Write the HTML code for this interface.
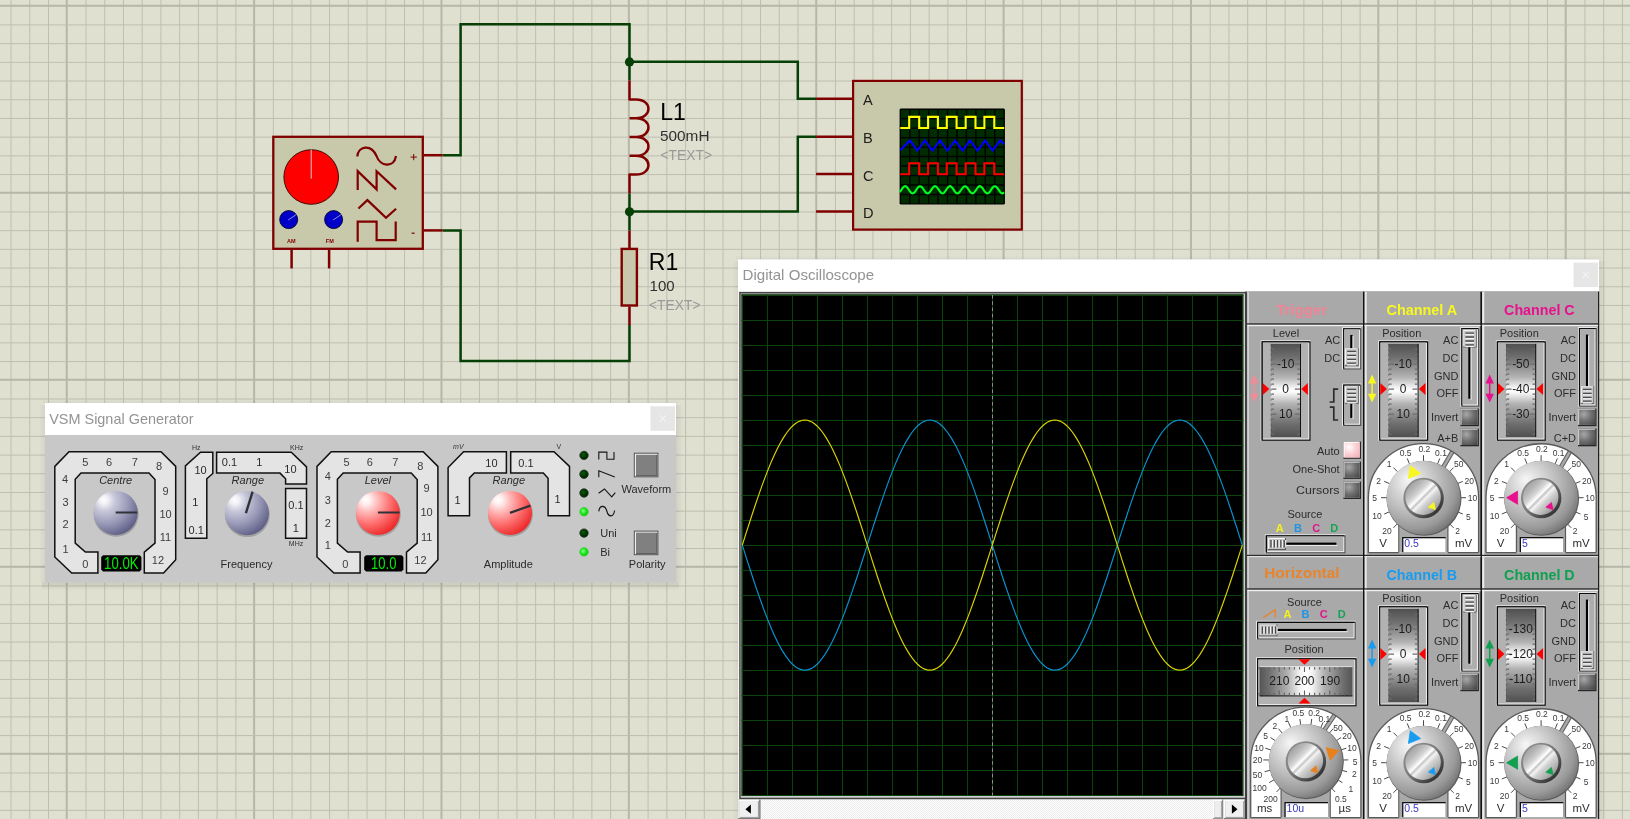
<!DOCTYPE html>
<html><head><meta charset="utf-8"><title>Proteus - Digital Oscilloscope</title>
<style>
html,body{margin:0;padding:0;background:#dfe0d0;overflow:hidden}
svg{display:block;font-family:"Liberation Sans",sans-serif;will-change:transform}
text{font-family:"Liberation Sans",sans-serif}
</style></head><body>
<svg width="1630" height="819" viewBox="0 0 1630 819">
<defs>
<radialGradient id="kb" cx="0.3" cy="0.26" r="0.8" fx="0.22" fy="0.2">
 <stop offset="0" stop-color="#ffffff"/><stop offset="0.12" stop-color="#f0f0f6"/><stop offset="0.3" stop-color="#c8c8da"/><stop offset="0.62" stop-color="#9c9cba"/><stop offset="1" stop-color="#5e5e86"/>
</radialGradient>
<radialGradient id="kr" cx="0.3" cy="0.26" r="0.8" fx="0.22" fy="0.2">
 <stop offset="0" stop-color="#ffffff"/><stop offset="0.12" stop-color="#fff0f0"/><stop offset="0.3" stop-color="#ffc0c0"/><stop offset="0.62" stop-color="#ff7474"/><stop offset="1" stop-color="#ec2828"/>
</radialGradient>
<radialGradient id="ledoff" cx="0.4" cy="0.4" r="0.6">
 <stop offset="0" stop-color="#0a5a0a"/><stop offset="0.6" stop-color="#003800"/><stop offset="1" stop-color="#002000"/>
</radialGradient>
<radialGradient id="ledon" cx="0.4" cy="0.4" r="0.6">
 <stop offset="0" stop-color="#90ff90"/><stop offset="0.5" stop-color="#20f020"/><stop offset="1" stop-color="#10c010"/>
</radialGradient>
<linearGradient id="rollV" x1="0" y1="0" x2="0" y2="1">
 <stop offset="0" stop-color="#505050"/><stop offset="0.14" stop-color="#6e6e6e"/><stop offset="0.36" stop-color="#b4b4b4"/><stop offset="0.47" stop-color="#f4f4f4"/><stop offset="0.5" stop-color="#ffffff"/><stop offset="0.53" stop-color="#f4f4f4"/><stop offset="0.64" stop-color="#b4b4b4"/><stop offset="0.86" stop-color="#6e6e6e"/><stop offset="1" stop-color="#505050"/>
</linearGradient>
<linearGradient id="rollH" x1="0" y1="0" x2="1" y2="0">
 <stop offset="0" stop-color="#555555"/><stop offset="0.1" stop-color="#6e6e6e"/><stop offset="0.3" stop-color="#b0b0b0"/><stop offset="0.43" stop-color="#f2f2f2"/><stop offset="0.5" stop-color="#ffffff"/><stop offset="0.57" stop-color="#f2f2f2"/><stop offset="0.7" stop-color="#b0b0b0"/><stop offset="0.9" stop-color="#6e6e6e"/><stop offset="1" stop-color="#555555"/>
</linearGradient>
<radialGradient id="dialOuter" cx="0.38" cy="0.36" r="0.68" fx="0.29" fy="0.25">
 <stop offset="0" stop-color="#f6f6f6"/><stop offset="0.28" stop-color="#dadada"/><stop offset="0.58" stop-color="#bababa"/><stop offset="0.84" stop-color="#9a9a9a"/><stop offset="1" stop-color="#767676"/>
</radialGradient>
<linearGradient id="recess" x1="0.15" y1="0.15" x2="0.85" y2="0.85">
 <stop offset="0" stop-color="#8c8c8c"/><stop offset="0.45" stop-color="#7c7c7c"/><stop offset="1" stop-color="#343434"/>
</linearGradient>
<linearGradient id="dialInner" x1="0.1" y1="0.1" x2="0.9" y2="0.9">
 <stop offset="0" stop-color="#9c9c9c"/><stop offset="0.2" stop-color="#b8b8b8"/><stop offset="0.34" stop-color="#d4d4d4"/><stop offset="0.45" stop-color="#ffffff"/><stop offset="0.505" stop-color="#c4c4c4"/><stop offset="0.56" stop-color="#f4f4f4"/><stop offset="0.66" stop-color="#d2d2d2"/><stop offset="0.82" stop-color="#b4b4b4"/><stop offset="1" stop-color="#8c8c8c"/>
</linearGradient>
<radialGradient id="btnDark" cx="0.3" cy="0.3" r="0.9">
 <stop offset="0" stop-color="#a8a8a8"/><stop offset="0.5" stop-color="#707070"/><stop offset="1" stop-color="#484848"/>
</radialGradient>
<radialGradient id="btnPink" cx="0.3" cy="0.3" r="0.9">
 <stop offset="0" stop-color="#ffffff"/><stop offset="0.5" stop-color="#fbd0d4"/><stop offset="1" stop-color="#f4b0b8"/>
</radialGradient>
<linearGradient id="shR" x1="0" y1="0" x2="1" y2="0"><stop offset="0" stop-color="#000" stop-opacity="0.07"/><stop offset="1" stop-color="#000" stop-opacity="0"/></linearGradient>
<linearGradient id="shL" x1="1" y1="0" x2="0" y2="0"><stop offset="0" stop-color="#000" stop-opacity="0.05"/><stop offset="1" stop-color="#000" stop-opacity="0"/></linearGradient>
<linearGradient id="shB" x1="0" y1="0" x2="0" y2="1"><stop offset="0" stop-color="#000" stop-opacity="0.09"/><stop offset="1" stop-color="#000" stop-opacity="0"/></linearGradient>
<linearGradient id="shT" x1="0" y1="1" x2="0" y2="0"><stop offset="0" stop-color="#000" stop-opacity="0.04"/><stop offset="1" stop-color="#000" stop-opacity="0"/></linearGradient>
</defs>
<rect x="0" y="0" width="1630" height="819" fill="#dfe0d0"/>
<g>
<rect x="10.53" y="0" width="1" height="819" fill="#bebfb0"/>
<rect x="29.26" y="0" width="1" height="819" fill="#bebfb0"/>
<rect x="48.0" y="0" width="1" height="819" fill="#bebfb0"/>
<rect x="65.74" y="0" width="2" height="819" fill="#b6b7a8"/>
<rect x="85.47" y="0" width="1" height="819" fill="#bebfb0"/>
<rect x="104.21" y="0" width="1" height="819" fill="#bebfb0"/>
<rect x="122.95" y="0" width="1" height="819" fill="#bebfb0"/>
<rect x="141.69" y="0" width="1" height="819" fill="#bebfb0"/>
<rect x="160.42" y="0" width="1" height="819" fill="#bebfb0"/>
<rect x="179.16" y="0" width="1" height="819" fill="#bebfb0"/>
<rect x="197.9" y="0" width="1" height="819" fill="#bebfb0"/>
<rect x="216.63" y="0" width="1" height="819" fill="#bebfb0"/>
<rect x="235.37" y="0" width="1" height="819" fill="#bebfb0"/>
<rect x="253.11" y="0" width="2" height="819" fill="#b6b7a8"/>
<rect x="272.84" y="0" width="1" height="819" fill="#bebfb0"/>
<rect x="291.58" y="0" width="1" height="819" fill="#bebfb0"/>
<rect x="310.32" y="0" width="1" height="819" fill="#bebfb0"/>
<rect x="329.05" y="0" width="1" height="819" fill="#bebfb0"/>
<rect x="347.79" y="0" width="1" height="819" fill="#bebfb0"/>
<rect x="366.53" y="0" width="1" height="819" fill="#bebfb0"/>
<rect x="385.27" y="0" width="1" height="819" fill="#bebfb0"/>
<rect x="404.0" y="0" width="1" height="819" fill="#bebfb0"/>
<rect x="422.74" y="0" width="1" height="819" fill="#bebfb0"/>
<rect x="440.48" y="0" width="2" height="819" fill="#b6b7a8"/>
<rect x="460.21" y="0" width="1" height="819" fill="#bebfb0"/>
<rect x="478.95" y="0" width="1" height="819" fill="#bebfb0"/>
<rect x="497.69" y="0" width="1" height="819" fill="#bebfb0"/>
<rect x="516.42" y="0" width="1" height="819" fill="#bebfb0"/>
<rect x="535.16" y="0" width="1" height="819" fill="#bebfb0"/>
<rect x="553.9" y="0" width="1" height="819" fill="#bebfb0"/>
<rect x="572.64" y="0" width="1" height="819" fill="#bebfb0"/>
<rect x="591.37" y="0" width="1" height="819" fill="#bebfb0"/>
<rect x="610.11" y="0" width="1" height="819" fill="#bebfb0"/>
<rect x="627.85" y="0" width="2" height="819" fill="#b6b7a8"/>
<rect x="647.58" y="0" width="1" height="819" fill="#bebfb0"/>
<rect x="666.32" y="0" width="1" height="819" fill="#bebfb0"/>
<rect x="685.06" y="0" width="1" height="819" fill="#bebfb0"/>
<rect x="703.79" y="0" width="1" height="819" fill="#bebfb0"/>
<rect x="722.53" y="0" width="1" height="819" fill="#bebfb0"/>
<rect x="741.27" y="0" width="1" height="819" fill="#bebfb0"/>
<rect x="760.01" y="0" width="1" height="819" fill="#bebfb0"/>
<rect x="778.74" y="0" width="1" height="819" fill="#bebfb0"/>
<rect x="797.48" y="0" width="1" height="819" fill="#bebfb0"/>
<rect x="815.22" y="0" width="2" height="819" fill="#b6b7a8"/>
<rect x="834.95" y="0" width="1" height="819" fill="#bebfb0"/>
<rect x="853.69" y="0" width="1" height="819" fill="#bebfb0"/>
<rect x="872.43" y="0" width="1" height="819" fill="#bebfb0"/>
<rect x="891.16" y="0" width="1" height="819" fill="#bebfb0"/>
<rect x="909.9" y="0" width="1" height="819" fill="#bebfb0"/>
<rect x="928.64" y="0" width="1" height="819" fill="#bebfb0"/>
<rect x="947.38" y="0" width="1" height="819" fill="#bebfb0"/>
<rect x="966.11" y="0" width="1" height="819" fill="#bebfb0"/>
<rect x="984.85" y="0" width="1" height="819" fill="#bebfb0"/>
<rect x="1002.59" y="0" width="2" height="819" fill="#b6b7a8"/>
<rect x="1022.32" y="0" width="1" height="819" fill="#bebfb0"/>
<rect x="1041.06" y="0" width="1" height="819" fill="#bebfb0"/>
<rect x="1059.8" y="0" width="1" height="819" fill="#bebfb0"/>
<rect x="1078.53" y="0" width="1" height="819" fill="#bebfb0"/>
<rect x="1097.27" y="0" width="1" height="819" fill="#bebfb0"/>
<rect x="1116.01" y="0" width="1" height="819" fill="#bebfb0"/>
<rect x="1134.75" y="0" width="1" height="819" fill="#bebfb0"/>
<rect x="1153.48" y="0" width="1" height="819" fill="#bebfb0"/>
<rect x="1172.22" y="0" width="1" height="819" fill="#bebfb0"/>
<rect x="1189.96" y="0" width="2" height="819" fill="#b6b7a8"/>
<rect x="1209.69" y="0" width="1" height="819" fill="#bebfb0"/>
<rect x="1228.43" y="0" width="1" height="819" fill="#bebfb0"/>
<rect x="1247.17" y="0" width="1" height="819" fill="#bebfb0"/>
<rect x="1265.9" y="0" width="1" height="819" fill="#bebfb0"/>
<rect x="1284.64" y="0" width="1" height="819" fill="#bebfb0"/>
<rect x="1303.38" y="0" width="1" height="819" fill="#bebfb0"/>
<rect x="1322.12" y="0" width="1" height="819" fill="#bebfb0"/>
<rect x="1340.85" y="0" width="1" height="819" fill="#bebfb0"/>
<rect x="1359.59" y="0" width="1" height="819" fill="#bebfb0"/>
<rect x="1377.33" y="0" width="2" height="819" fill="#b6b7a8"/>
<rect x="1397.06" y="0" width="1" height="819" fill="#bebfb0"/>
<rect x="1415.8" y="0" width="1" height="819" fill="#bebfb0"/>
<rect x="1434.54" y="0" width="1" height="819" fill="#bebfb0"/>
<rect x="1453.27" y="0" width="1" height="819" fill="#bebfb0"/>
<rect x="1472.01" y="0" width="1" height="819" fill="#bebfb0"/>
<rect x="1490.75" y="0" width="1" height="819" fill="#bebfb0"/>
<rect x="1509.49" y="0" width="1" height="819" fill="#bebfb0"/>
<rect x="1528.22" y="0" width="1" height="819" fill="#bebfb0"/>
<rect x="1546.96" y="0" width="1" height="819" fill="#bebfb0"/>
<rect x="1564.7" y="0" width="2" height="819" fill="#b6b7a8"/>
<rect x="1584.43" y="0" width="1" height="819" fill="#bebfb0"/>
<rect x="1603.17" y="0" width="1" height="819" fill="#bebfb0"/>
<rect x="1621.91" y="0" width="1" height="819" fill="#bebfb0"/>
<rect x="0" y="4.74" width="1630" height="2" fill="#b6b7a8"/>
<rect x="0" y="24.44" width="1630" height="1" fill="#bebfb0"/>
<rect x="0" y="43.14" width="1630" height="1" fill="#bebfb0"/>
<rect x="0" y="61.84" width="1630" height="1" fill="#bebfb0"/>
<rect x="0" y="80.54" width="1630" height="1" fill="#bebfb0"/>
<rect x="0" y="99.24" width="1630" height="1" fill="#bebfb0"/>
<rect x="0" y="117.95" width="1630" height="1" fill="#bebfb0"/>
<rect x="0" y="136.65" width="1630" height="1" fill="#bebfb0"/>
<rect x="0" y="155.35" width="1630" height="1" fill="#bebfb0"/>
<rect x="0" y="174.05" width="1630" height="1" fill="#bebfb0"/>
<rect x="0" y="191.75" width="1630" height="2" fill="#b6b7a8"/>
<rect x="0" y="211.45" width="1630" height="1" fill="#bebfb0"/>
<rect x="0" y="230.15" width="1630" height="1" fill="#bebfb0"/>
<rect x="0" y="248.85" width="1630" height="1" fill="#bebfb0"/>
<rect x="0" y="267.55" width="1630" height="1" fill="#bebfb0"/>
<rect x="0" y="286.25" width="1630" height="1" fill="#bebfb0"/>
<rect x="0" y="304.96" width="1630" height="1" fill="#bebfb0"/>
<rect x="0" y="323.66" width="1630" height="1" fill="#bebfb0"/>
<rect x="0" y="342.36" width="1630" height="1" fill="#bebfb0"/>
<rect x="0" y="361.06" width="1630" height="1" fill="#bebfb0"/>
<rect x="0" y="378.76" width="1630" height="2" fill="#b6b7a8"/>
<rect x="0" y="398.46" width="1630" height="1" fill="#bebfb0"/>
<rect x="0" y="417.16" width="1630" height="1" fill="#bebfb0"/>
<rect x="0" y="435.86" width="1630" height="1" fill="#bebfb0"/>
<rect x="0" y="454.56" width="1630" height="1" fill="#bebfb0"/>
<rect x="0" y="473.27" width="1630" height="1" fill="#bebfb0"/>
<rect x="0" y="491.97" width="1630" height="1" fill="#bebfb0"/>
<rect x="0" y="510.67" width="1630" height="1" fill="#bebfb0"/>
<rect x="0" y="529.37" width="1630" height="1" fill="#bebfb0"/>
<rect x="0" y="548.07" width="1630" height="1" fill="#bebfb0"/>
<rect x="0" y="565.77" width="1630" height="2" fill="#b6b7a8"/>
<rect x="0" y="585.47" width="1630" height="1" fill="#bebfb0"/>
<rect x="0" y="604.17" width="1630" height="1" fill="#bebfb0"/>
<rect x="0" y="622.87" width="1630" height="1" fill="#bebfb0"/>
<rect x="0" y="641.57" width="1630" height="1" fill="#bebfb0"/>
<rect x="0" y="660.27" width="1630" height="1" fill="#bebfb0"/>
<rect x="0" y="678.98" width="1630" height="1" fill="#bebfb0"/>
<rect x="0" y="697.68" width="1630" height="1" fill="#bebfb0"/>
<rect x="0" y="716.38" width="1630" height="1" fill="#bebfb0"/>
<rect x="0" y="735.08" width="1630" height="1" fill="#bebfb0"/>
<rect x="0" y="752.78" width="1630" height="2" fill="#b6b7a8"/>
<rect x="0" y="772.48" width="1630" height="1" fill="#bebfb0"/>
<rect x="0" y="791.18" width="1630" height="1" fill="#bebfb0"/>
<rect x="0" y="809.88" width="1630" height="1" fill="#bebfb0"/>
</g>
<polyline points="442.6,155.2 460.6,155.2 460.6,24.2 629.5,24.2 629.5,80.5" fill="none" stroke="#064006" stroke-width="2.5" stroke-linejoin="miter" />
<polyline points="442.6,230.4 460.6,230.4 460.6,360.9 629.5,360.9 629.5,325.0" fill="none" stroke="#064006" stroke-width="2.5" stroke-linejoin="miter" />
<polyline points="629.5,61.7 797.8,61.7 797.8,98.8 816.1,98.8" fill="none" stroke="#064006" stroke-width="2.5" stroke-linejoin="miter" />
<polyline points="629.5,193.4 629.5,230.6" fill="none" stroke="#064006" stroke-width="2.5" stroke-linejoin="miter" />
<polyline points="629.5,211.6 797.8,211.6 797.8,136.7 816.1,136.7" fill="none" stroke="#064006" stroke-width="2.5" stroke-linejoin="miter" />
<circle cx="629.5" cy="61.9" r="4.6" fill="#064006"/>
<circle cx="629.5" cy="211.8" r="4.6" fill="#064006"/>
<rect x="273.3" y="136.8" width="149.5" height="112" fill="#c8c8aa" stroke="#800000" stroke-width="2.3"/>
<polyline points="424.0,155.2 442.6,155.2" fill="none" stroke="#800000" stroke-width="2.5" stroke-linejoin="miter" />
<polyline points="424.0,230.4 442.6,230.4" fill="none" stroke="#800000" stroke-width="2.5" stroke-linejoin="miter" />
<polyline points="291.6,249.9 291.6,268.4" fill="none" stroke="#800000" stroke-width="2.5" stroke-linejoin="miter" />
<polyline points="329.1,249.9 329.1,268.4" fill="none" stroke="#800000" stroke-width="2.5" stroke-linejoin="miter" />
<circle cx="311.2" cy="177" r="27.3" fill="#ff0000" stroke="#300000" stroke-width="0.9"/>
<line x1="311.2" y1="149.6" x2="311.2" y2="178.6" stroke="#d8c8c8" stroke-width="1"/>
<circle cx="288.7" cy="219.6" r="9" fill="#0000c8" stroke="#000030" stroke-width="0.9"/>
<line x1="288.2" y1="220" x2="295.9" y2="214.8" stroke="#9090e0" stroke-width="1"/>
<circle cx="333.6" cy="219.6" r="9" fill="#0000c8" stroke="#000030" stroke-width="0.9"/>
<line x1="333.1" y1="220" x2="340.8" y2="214.8" stroke="#9090e0" stroke-width="1"/>
<text x="291.2" y="242.6" font-size="5.5" fill="#800000" text-anchor="middle" font-weight="bold" font-style="normal" >AM</text>
<text x="329.8" y="242.6" font-size="5.5" fill="#800000" text-anchor="middle" font-weight="bold" font-style="normal" >FM</text>
<path d="M410.6,157.1 H416.8 M413.7,154 V160.2" stroke="#800000" stroke-width="1" fill="none"/>
<path d="M411.6,233.2 H414.6" stroke="#800000" stroke-width="1.2" fill="none"/>
<path d="M357.3,156.5 C358,146 371,143.5 376.5,156 C380,166.5 394,168.5 396,156" stroke="#800000" stroke-width="2.2" fill="none"/>
<polyline points="357.7,190.0 357.7,171.2 376.6,189.4 376.6,171.2 396.1,189.4" fill="none" stroke="#800000" stroke-width="2.2" stroke-linejoin="miter" />
<polyline points="358.4,208.5 367.4,200.1 386.0,217.7 396.1,208.7" fill="none" stroke="#800000" stroke-width="2.2" stroke-linejoin="miter" />
<polyline points="357.7,241.7 357.7,221.6 376.6,221.6 376.6,240.1 395.7,240.1 395.7,221.6" fill="none" stroke="#800000" stroke-width="2.2" stroke-linejoin="miter" />
<polyline points="629.5,80.5 629.5,100.4" fill="none" stroke="#800000" stroke-width="2.5" stroke-linejoin="miter" />
<path d="M629.5,99.4 H636 C652.6,99.4 652.6,118.2 636,118.2 H631 M629.5,118.2 H636 C652.6,118.2 652.6,137.0 636,137.0 H631 M629.5,137.0 H636 C652.6,137.0 652.6,155.8 636,155.8 H631 M629.5,155.8 H636 C652.6,155.8 652.6,174.6 636,174.6 H629.5 " stroke="#800000" stroke-width="2.5" fill="none" stroke-linejoin="round"/>
<polyline points="629.5,173.6 629.5,193.4" fill="none" stroke="#800000" stroke-width="2.5" stroke-linejoin="miter" />
<polyline points="629.5,230.6 629.5,248.0" fill="none" stroke="#800000" stroke-width="2.5" stroke-linejoin="miter" />
<rect x="621.7" y="248.9" width="15.2" height="56.6" fill="#c8c8aa" stroke="#800000" stroke-width="2.4"/>
<polyline points="629.5,306.5 629.5,325.0" fill="none" stroke="#800000" stroke-width="2.5" stroke-linejoin="miter" />
<text x="660.2" y="120.0" font-size="23" fill="#000" text-anchor="start" font-weight="normal" font-style="normal" >L1</text>
<text x="660.0" y="141.3" font-size="15" fill="#303030" text-anchor="start" font-weight="normal" font-style="normal" textLength="49.5" lengthAdjust="spacingAndGlyphs">500mH</text>
<text x="660.5" y="160.0" font-size="14" fill="#9a9a9a" text-anchor="start" font-weight="normal" font-style="normal" textLength="51.5" lengthAdjust="spacingAndGlyphs">&lt;TEXT&gt;</text>
<text x="648.8" y="270.0" font-size="23" fill="#000" text-anchor="start" font-weight="normal" font-style="normal" >R1</text>
<text x="649.6" y="291.0" font-size="15" fill="#303030" text-anchor="start" font-weight="normal" font-style="normal" >100</text>
<text x="649.0" y="309.7" font-size="14" fill="#9a9a9a" text-anchor="start" font-weight="normal" font-style="normal" textLength="51.5" lengthAdjust="spacingAndGlyphs">&lt;TEXT&gt;</text>
<rect x="853.1" y="80.9" width="168.7" height="148.7" fill="#c8c8aa" stroke="#800000" stroke-width="2.2"/>
<polyline points="816.1,98.8 852.0,98.8" fill="none" stroke="#800000" stroke-width="2.5" stroke-linejoin="miter" />
<text x="863.0" y="105.4" font-size="14.6" fill="#202020" text-anchor="start" font-weight="normal" font-style="normal" >A</text>
<polyline points="816.1,136.7 852.0,136.7" fill="none" stroke="#800000" stroke-width="2.5" stroke-linejoin="miter" />
<text x="863.0" y="143.3" font-size="14.6" fill="#202020" text-anchor="start" font-weight="normal" font-style="normal" >B</text>
<polyline points="816.1,174.0 852.0,174.0" fill="none" stroke="#800000" stroke-width="2.5" stroke-linejoin="miter" />
<text x="863.0" y="180.6" font-size="14.6" fill="#202020" text-anchor="start" font-weight="normal" font-style="normal" >C</text>
<polyline points="816.1,211.6 852.0,211.6" fill="none" stroke="#800000" stroke-width="2.5" stroke-linejoin="miter" />
<text x="863.0" y="218.2" font-size="14.6" fill="#202020" text-anchor="start" font-weight="normal" font-style="normal" >D</text>
<rect x="900.3" y="109.2" width="103.9" height="94.7" fill="#002c00"/>
<path d="M900.30,109.2 V203.9 M909.75,109.2 V203.9 M919.19,109.2 V203.9 M928.64,109.2 V203.9 M938.08,109.2 V203.9 M947.53,109.2 V203.9 M956.97,109.2 V203.9 M966.42,109.2 V203.9 M975.86,109.2 V203.9 M985.31,109.2 V203.9 M994.75,109.2 V203.9 M1004.20,109.2 V203.9 M900.3,109.20 H1004.1999999999999 M900.3,118.67 H1004.1999999999999 M900.3,128.14 H1004.1999999999999 M900.3,137.61 H1004.1999999999999 M900.3,147.08 H1004.1999999999999 M900.3,156.55 H1004.1999999999999 M900.3,166.02 H1004.1999999999999 M900.3,175.49 H1004.1999999999999 M900.3,184.96 H1004.1999999999999 M900.3,194.43 H1004.1999999999999 M900.3,203.90 H1004.1999999999999 " stroke="#000" stroke-width="1.4" fill="none"/>
<polyline points="900.3,128.0 909.2,128.0 909.2,116.9 919.2,116.9 919.2,128.0 928.1,128.0 928.1,116.9 937.9,116.9 937.9,128.0 946.8,128.0 946.8,116.9 956.6,116.9 956.6,128.0 965.7,128.0 965.7,116.9 975.5,116.9 975.5,128.0 984.4,128.0 984.4,116.9 994.3,116.9 994.3,128.0 1004.2,128.0" fill="none" stroke="#ffff00" stroke-width="2.1" stroke-linejoin="miter" />
<polyline points="900.3,150.2 909.9,140.4 917.4,150.6 924.9,140.4 932.4,150.6 940.0,140.4 947.5,150.6 955.0,140.4 962.5,150.6 970.0,140.4 977.6,150.6 985.1,140.4 992.6,150.6 1000.1,140.4 1004.2,144.0" fill="none" stroke="#0000ff" stroke-width="2.1" stroke-linejoin="miter" />
<polyline points="900.3,174.3 909.2,174.3 909.2,163.3 919.2,163.3 919.2,174.3 928.1,174.3 928.1,163.3 937.9,163.3 937.9,174.3 946.8,174.3 946.8,163.3 956.6,163.3 956.6,174.3 965.7,174.3 965.7,163.3 975.5,163.3 975.5,174.3 984.4,174.3 984.4,163.3 994.3,163.3 994.3,174.3 1004.2,174.3" fill="none" stroke="#ff0000" stroke-width="2.1" stroke-linejoin="miter" />
<polyline points="899.8,192.0 900.5,191.1 901.2,190.1 901.9,189.0 902.6,188.1 903.3,187.2 904.0,186.6 904.7,186.3 905.4,186.2 906.1,186.5 906.8,187.0 907.5,187.8 908.2,188.8 908.9,189.8 909.6,190.9 910.3,191.8 911.0,192.6 911.7,193.1 912.4,193.4 913.1,193.3 913.8,193.0 914.5,192.3 915.2,191.5 915.9,190.5 916.6,189.4 917.3,188.4 918.0,187.5 918.7,186.8 919.4,186.3 920.1,186.2 920.8,186.4 921.5,186.8 922.2,187.5 922.9,188.4 923.6,189.5 924.3,190.5 925.0,191.5 925.7,192.4 926.4,193.0 927.1,193.3 927.8,193.4 928.5,193.1 929.2,192.6 929.9,191.8 930.6,190.8 931.3,189.8 932.0,188.8 932.7,187.8 933.4,187.0 934.1,186.5 934.8,186.2 935.5,186.3 936.2,186.6 936.9,187.3 937.6,188.1 938.3,189.1 939.0,190.1 939.7,191.2 940.4,192.1 941.1,192.8 941.8,193.2 942.5,193.4 943.2,193.2 943.9,192.8 944.6,192.1 945.3,191.2 946.0,190.2 946.7,189.1 947.4,188.1 948.1,187.3 948.8,186.6 949.5,186.3 950.2,186.2 950.9,186.5 951.6,187.0 952.3,187.8 953.0,188.7 953.7,189.8 954.4,190.8 955.1,191.8 955.8,192.6 956.5,193.1 957.2,193.4 957.9,193.3 958.6,193.0 959.3,192.4 960.0,191.5 960.7,190.5 961.4,189.5 962.1,188.5 962.8,187.6 963.5,186.8 964.2,186.4 964.9,186.2 965.6,186.3 966.3,186.8 967.0,187.5 967.7,188.4 968.4,189.4 969.1,190.4 969.8,191.4 970.5,192.3 971.2,192.9 971.9,193.3 972.6,193.4 973.3,193.2 974.0,192.6 974.7,191.9 975.4,190.9 976.1,189.9 976.8,188.8 977.5,187.9 978.2,187.1 978.9,186.5 979.6,186.2 980.3,186.3 981.0,186.6 981.7,187.2 982.4,188.0 983.1,189.0 983.8,190.1 984.5,191.1 985.2,192.0 985.9,192.7 986.6,193.2 987.3,193.4 988.0,193.3 988.7,192.8 989.4,192.2 990.1,191.3 990.8,190.2 991.5,189.2 992.2,188.2 992.9,187.3 993.6,186.7 994.3,186.3 995.0,186.2 995.7,186.4 996.4,187.0 997.1,187.7 997.8,188.7 998.5,189.7 999.2,190.7 999.9,191.7 1000.6,192.5 1001.3,193.1 1002.0,193.4 1002.7,193.4 1003.4,193.0 1004.1,192.4" fill="none" stroke="#00ff20" stroke-width="2.1" stroke-linejoin="miter" />
<rect x="676" y="405" width="7" height="177.70000000000005" fill="url(#shR)"/>
<rect x="39" y="405" width="6" height="177.70000000000005" fill="url(#shL)"/>
<rect x="42" y="582.7" width="637" height="8" fill="url(#shB)"/>
<rect x="43" y="399" width="635" height="4" fill="url(#shT)"/>
<rect x="45" y="403" width="631" height="179.70000000000005" fill="#c8c8c8"/>
<rect x="45" y="403" width="631" height="32" fill="#ffffff"/>
<text x="49.2" y="423.8" font-size="15" fill="#939393" text-anchor="start" font-weight="normal" font-style="normal" textLength="144.5" lengthAdjust="spacingAndGlyphs">VSM Signal Generator</text>
<rect x="650.5" y="406.3" width="24.5" height="24.5" fill="#e6e6e6"/>
<path d="M659.5,415.3 L665.9000000000001,421.7 M665.9000000000001,415.3 L659.5,421.7" stroke="#fafafa" stroke-width="1" fill="none"/>
<polygon points="69.0,451.7 161.0,451.7 175.7,466.4 175.7,559.8 163.6,573.0 144.3,573.0 144.3,552.1 155.0,543.1 155.0,479.5 149.0,472.9 81.0,472.9 75.2,479.2 75.2,543.1 85.4,552.1 97.9,552.1 97.9,573.0 71.7,573.0 54.8,557.0 54.8,466.4" fill="#e4e4e4" stroke="#101010" stroke-width="1.5" stroke-linejoin="miter"/>
<text x="85.2" y="466.3" font-size="11" fill="#3c3c3c" text-anchor="middle" font-weight="normal" font-style="normal" >5</text>
<text x="109.0" y="466.3" font-size="11" fill="#3c3c3c" text-anchor="middle" font-weight="normal" font-style="normal" >6</text>
<text x="134.8" y="466.3" font-size="11" fill="#3c3c3c" text-anchor="middle" font-weight="normal" font-style="normal" >7</text>
<text x="159.0" y="470.0" font-size="11" fill="#3c3c3c" text-anchor="middle" font-weight="normal" font-style="normal" >8</text>
<text x="65.0" y="482.7" font-size="11" fill="#3c3c3c" text-anchor="middle" font-weight="normal" font-style="normal" >4</text>
<text x="65.5" y="506.0" font-size="11" fill="#3c3c3c" text-anchor="middle" font-weight="normal" font-style="normal" >3</text>
<text x="65.5" y="527.5" font-size="11" fill="#3c3c3c" text-anchor="middle" font-weight="normal" font-style="normal" >2</text>
<text x="65.5" y="552.5" font-size="11" fill="#3c3c3c" text-anchor="middle" font-weight="normal" font-style="normal" >1</text>
<text x="85.2" y="568.0" font-size="11" fill="#3c3c3c" text-anchor="middle" font-weight="normal" font-style="normal" >0</text>
<text x="165.5" y="494.9" font-size="11" fill="#3c3c3c" text-anchor="middle" font-weight="normal" font-style="normal" >9</text>
<text x="165.5" y="517.5" font-size="11" fill="#3c3c3c" text-anchor="middle" font-weight="normal" font-style="normal" >10</text>
<text x="165.5" y="541.3" font-size="11" fill="#3c3c3c" text-anchor="middle" font-weight="normal" font-style="normal" >11</text>
<text x="157.9" y="564.0" font-size="11" fill="#3c3c3c" text-anchor="middle" font-weight="normal" font-style="normal" >12</text>
<text x="115.7" y="484.0" font-size="11" fill="#2a2a2a" text-anchor="middle" font-weight="normal" font-style="italic" >Centre</text>
<circle cx="116.1" cy="514.3" r="22.5" fill="#000" opacity="0.2"/>
<circle cx="115.7" cy="512.9" r="22" fill="url(#kb)"/>
<line x1="115.7" y1="512.5" x2="137.3" y2="512.5" stroke="#303038" stroke-width="2"/>
<path d="M103.0,555.3 H139.59999999999997 L141.39999999999998,557.0999999999999 V569.6 L139.59999999999997,571.4 H103.0 L101.2,569.6 V557.0999999999999 Z" fill="#000"/>
<text x="121.3" y="569.2" font-size="15.6" fill="#00ee00" text-anchor="middle" font-weight="normal" font-style="normal" textLength="34.4" lengthAdjust="spacingAndGlyphs">10.0K</text>
<polygon points="331.2,451.7 423.2,451.7 437.9,466.4 437.9,559.8 425.8,573.0 406.5,573.0 406.5,552.1 417.2,543.1 417.2,479.5 411.2,472.9 343.2,472.9 337.4,479.2 337.4,543.1 347.6,552.1 360.1,552.1 360.1,573.0 333.9,573.0 317.0,557.0 317.0,466.4" fill="#e4e4e4" stroke="#101010" stroke-width="1.5" stroke-linejoin="miter"/>
<text x="327.7" y="479.9" font-size="11" fill="#3c3c3c" text-anchor="middle" font-weight="normal" font-style="normal" >4</text>
<text x="327.7" y="503.9" font-size="11" fill="#3c3c3c" text-anchor="middle" font-weight="normal" font-style="normal" >3</text>
<text x="327.7" y="526.6" font-size="11" fill="#3c3c3c" text-anchor="middle" font-weight="normal" font-style="normal" >2</text>
<text x="327.7" y="548.7" font-size="11" fill="#3c3c3c" text-anchor="middle" font-weight="normal" font-style="normal" >1</text>
<text x="345.3" y="567.6" font-size="11" fill="#3c3c3c" text-anchor="middle" font-weight="normal" font-style="normal" >0</text>
<text x="426.6" y="492.2" font-size="11" fill="#3c3c3c" text-anchor="middle" font-weight="normal" font-style="normal" >9</text>
<text x="426.6" y="516.2" font-size="11" fill="#3c3c3c" text-anchor="middle" font-weight="normal" font-style="normal" >10</text>
<text x="426.6" y="541.3" font-size="11" fill="#3c3c3c" text-anchor="middle" font-weight="normal" font-style="normal" >11</text>
<text x="420.4" y="564.4" font-size="11" fill="#3c3c3c" text-anchor="middle" font-weight="normal" font-style="normal" >12</text>
<text x="346.6" y="466.1" font-size="11" fill="#3c3c3c" text-anchor="middle" font-weight="normal" font-style="normal" >5</text>
<text x="369.9" y="466.1" font-size="11" fill="#3c3c3c" text-anchor="middle" font-weight="normal" font-style="normal" >6</text>
<text x="395.2" y="466.1" font-size="11" fill="#3c3c3c" text-anchor="middle" font-weight="normal" font-style="normal" >7</text>
<text x="420.4" y="469.5" font-size="11" fill="#3c3c3c" text-anchor="middle" font-weight="normal" font-style="normal" >8</text>
<text x="377.9" y="484.0" font-size="11" fill="#2a2a2a" text-anchor="middle" font-weight="normal" font-style="italic" >Level</text>
<circle cx="378.29999999999995" cy="514.3" r="22.5" fill="#000" opacity="0.2"/>
<circle cx="377.9" cy="512.9" r="22" fill="url(#kr)"/>
<line x1="377.9" y1="512.5" x2="399.5" y2="512.5" stroke="#303038" stroke-width="2"/>
<path d="M366.0,555.3 H401.59999999999997 L403.4,557.0999999999999 V569.6 L401.59999999999997,571.4 H366.0 L364.2,569.6 V557.0999999999999 Z" fill="#000"/>
<text x="383.8" y="569.2" font-size="15.6" fill="#00ee00" text-anchor="middle" font-weight="normal" font-style="normal" textLength="25.4" lengthAdjust="spacingAndGlyphs">10.0</text>
<polygon points="200.5,452.3 212.8,452.3 212.8,473.5 206.8,478.8 206.8,538.2 185.4,538.2 185.4,465.9" fill="#e4e4e4" stroke="#101010" stroke-width="1.5" stroke-linejoin="miter"/>
<polygon points="216.6,452.3 291.3,452.3 306.5,466.9 306.5,483.9 285.6,483.9 285.6,478.8 280.0,473.1 216.6,473.1" fill="#e4e4e4" stroke="#101010" stroke-width="1.5" stroke-linejoin="miter"/>
<polygon points="285.6,488.6 306.5,488.6 306.5,538.2 285.6,538.2" fill="#e4e4e4" stroke="#101010" stroke-width="1.5" stroke-linejoin="miter"/>
<text x="196.2" y="449.6" font-size="7" fill="#333" text-anchor="middle" font-weight="normal" font-style="normal" >Hz</text>
<text x="296.6" y="449.6" font-size="7" fill="#333" text-anchor="middle" font-weight="normal" font-style="normal" >KHz</text>
<text x="296.0" y="546.2" font-size="7" fill="#333" text-anchor="middle" font-weight="normal" font-style="normal" >MHz</text>
<text x="200.5" y="473.6" font-size="11" fill="#2a2a2a" text-anchor="middle" font-weight="normal" font-style="normal" >10</text>
<text x="195.4" y="506.3" font-size="11" fill="#2a2a2a" text-anchor="middle" font-weight="normal" font-style="normal" >1</text>
<text x="196.2" y="533.6" font-size="11" fill="#2a2a2a" text-anchor="middle" font-weight="normal" font-style="normal" >0.1</text>
<text x="229.5" y="466.4" font-size="11" fill="#2a2a2a" text-anchor="middle" font-weight="normal" font-style="normal" >0.1</text>
<text x="259.2" y="466.4" font-size="11" fill="#2a2a2a" text-anchor="middle" font-weight="normal" font-style="normal" >1</text>
<text x="290.4" y="472.7" font-size="11" fill="#2a2a2a" text-anchor="middle" font-weight="normal" font-style="normal" >10</text>
<text x="296.0" y="508.6" font-size="11" fill="#2a2a2a" text-anchor="middle" font-weight="normal" font-style="normal" >0.1</text>
<text x="295.7" y="531.7" font-size="11" fill="#2a2a2a" text-anchor="middle" font-weight="normal" font-style="normal" >1</text>
<text x="247.8" y="484.0" font-size="11" fill="#2a2a2a" text-anchor="middle" font-weight="normal" font-style="italic" >Range</text>
<text x="246.5" y="568.0" font-size="11" fill="#2a2a2a" text-anchor="middle" font-weight="normal" font-style="normal" >Frequency</text>
<circle cx="247.3" cy="514.6" r="22.5" fill="#000" opacity="0.2"/>
<circle cx="246.9" cy="513.2" r="22" fill="url(#kb)"/>
<line x1="245.9" y1="513.2" x2="252.6" y2="491.6" stroke="#303038" stroke-width="2.4"/>
<polygon points="463.6,451.7 506.4,451.7 506.4,472.9 474.3,472.9 469.5,477.9 469.5,515.7 448.1,515.7 448.1,467.6" fill="#e4e4e4" stroke="#101010" stroke-width="1.5" stroke-linejoin="miter"/>
<polygon points="510.7,451.7 554.0,451.7 569.5,466.4 569.5,515.7 548.1,515.7 548.1,478.3 543.3,472.9 510.7,472.9" fill="#e4e4e4" stroke="#101010" stroke-width="1.5" stroke-linejoin="miter"/>
<text x="458.3" y="449.4" font-size="7" fill="#333" text-anchor="middle" font-weight="normal" font-style="italic" >mV</text>
<text x="558.8" y="449.4" font-size="7" fill="#333" text-anchor="middle" font-weight="normal" font-style="normal" >V</text>
<text x="491.4" y="466.8" font-size="11" fill="#2a2a2a" text-anchor="middle" font-weight="normal" font-style="normal" >10</text>
<text x="526.0" y="466.8" font-size="11" fill="#2a2a2a" text-anchor="middle" font-weight="normal" font-style="normal" >0.1</text>
<text x="457.6" y="503.7" font-size="11" fill="#2a2a2a" text-anchor="middle" font-weight="normal" font-style="normal" >1</text>
<text x="557.6" y="502.9" font-size="11" fill="#2a2a2a" text-anchor="middle" font-weight="normal" font-style="normal" >1</text>
<text x="508.8" y="484.0" font-size="11" fill="#2a2a2a" text-anchor="middle" font-weight="normal" font-style="italic" >Range</text>
<text x="508.3" y="568.0" font-size="11" fill="#2a2a2a" text-anchor="middle" font-weight="normal" font-style="normal" >Amplitude</text>
<circle cx="510.4" cy="514.3" r="22.5" fill="#000" opacity="0.2"/>
<circle cx="510" cy="512.9" r="22" fill="url(#kr)"/>
<line x1="510" y1="512.9" x2="530.4" y2="505.6" stroke="#303038" stroke-width="2.2"/>
<circle cx="584" cy="455.4" r="4.2" fill="url(#ledoff)" stroke="#203020" stroke-width="0.8"/>
<circle cx="584" cy="474.2" r="4.2" fill="url(#ledoff)" stroke="#203020" stroke-width="0.8"/>
<circle cx="584" cy="493" r="4.2" fill="url(#ledoff)" stroke="#203020" stroke-width="0.8"/>
<circle cx="584" cy="511.7" r="4.2" fill="url(#ledon)" stroke="#30d030" stroke-width="0.8"/>
<circle cx="584" cy="533.1" r="4.2" fill="url(#ledoff)" stroke="#203020" stroke-width="0.8"/>
<circle cx="584" cy="551.9" r="4.2" fill="url(#ledon)" stroke="#30d030" stroke-width="0.8"/>
<path d="M598.8,459.6 V452.1 H606.9 V459.3 H614 V452.1" stroke="#151515" stroke-width="1.1" fill="none"/>
<path d="M598.8,477.3 V470.7 L614.8,477.1" stroke="#151515" stroke-width="1.1" fill="none"/>
<path d="M598.6,493.2 L604.5,489 L611.7,496.9 L615.3,492.6" stroke="#151515" stroke-width="1.1" fill="none"/>
<path d="M598.8,511.4 C599.5,505 605,504.5 606.8,511 C608.5,517.5 613.5,517.5 614.6,510.5" stroke="#151515" stroke-width="1.15" fill="none"/>
<text x="600.2" y="537.4" font-size="11" fill="#2a2a2a" text-anchor="start" font-weight="normal" font-style="normal" >Uni</text>
<text x="600.2" y="556.0" font-size="11" fill="#2a2a2a" text-anchor="start" font-weight="normal" font-style="normal" >Bi</text>
<rect x="633.8" y="452.7" width="24.6" height="24.6" fill="#505050"/>
<rect x="634.8" y="453.7" width="22.6" height="22.6" fill="#f0f0f0"/>
<rect x="636.0" y="454.9" width="21.400000000000002" height="21.400000000000002" fill="#606060"/>
<rect x="636.0" y="454.9" width="20.200000000000003" height="20.200000000000003" fill="#808080"/>
<rect x="633.8" y="530.6" width="24.6" height="24.6" fill="#505050"/>
<rect x="634.8" y="531.6" width="22.6" height="22.6" fill="#f0f0f0"/>
<rect x="636.0" y="532.8000000000001" width="21.400000000000002" height="21.400000000000002" fill="#606060"/>
<rect x="636.0" y="532.8000000000001" width="20.200000000000003" height="20.200000000000003" fill="#808080"/>
<text x="646.4" y="492.6" font-size="11" fill="#2a2a2a" text-anchor="middle" font-weight="normal" font-style="normal" >Waveform</text>
<text x="647.2" y="568.0" font-size="11" fill="#2a2a2a" text-anchor="middle" font-weight="normal" font-style="normal" >Polarity</text>
<rect x="1599" y="261.3" width="7" height="568.7" fill="url(#shR)"/>
<rect x="732" y="261.3" width="6" height="568.7" fill="url(#shL)"/>
<rect x="735" y="830" width="867" height="8" fill="url(#shB)"/>
<rect x="736" y="255.3" width="865" height="4" fill="url(#shT)"/>
<rect x="738" y="259.3" width="861" height="570.7" fill="#a8a8a8"/>
<rect x="738" y="259.3" width="861" height="32" fill="#ffffff"/>
<text x="742.6" y="279.8" font-size="15" fill="#939393" text-anchor="start" font-weight="normal" font-style="normal" textLength="131.5" lengthAdjust="spacingAndGlyphs">Digital Oscilloscope</text>
<rect x="1573.5" y="262.6" width="24.5" height="24.5" fill="#e6e6e6"/>
<path d="M1582.5,271.6 L1588.9,278.0 M1588.9,271.6 L1582.5,278.0" stroke="#fafafa" stroke-width="1" fill="none"/>
<rect x="738" y="291.3" width="510" height="540" fill="#f4f4f4"/>
<rect x="739.2" y="292" width="1506.8" height="0" fill="none"/>
<rect x="739.2" y="292" width="507.6" height="507.5" fill="#454545"/>
<rect x="740.7" y="293.5" width="504.5" height="504.2" fill="#d0d0d0"/>
<rect x="740.7" y="293.5" width="502.8" height="502.2" fill="#7c8c7c"/>
<rect x="741.7" y="294.5" width="501.6" height="501.2" fill="#000"/>
<path d="M742.5,294.5 V795.7 M767.5,294.5 V795.7 M792.5,294.5 V795.7 M817.5,294.5 V795.7 M842.5,294.5 V795.7 M867.5,294.5 V795.7 M892.5,294.5 V795.7 M917.5,294.5 V795.7 M942.5,294.5 V795.7 M967.5,294.5 V795.7 M992.5,294.5 V795.7 M1017.5,294.5 V795.7 M1042.5,294.5 V795.7 M1067.5,294.5 V795.7 M1092.5,294.5 V795.7 M1117.5,294.5 V795.7 M1142.5,294.5 V795.7 M1167.5,294.5 V795.7 M1192.5,294.5 V795.7 M1217.5,294.5 V795.7 M1242.5,294.5 V795.7 M741.7,295.5 H1243.3 M741.7,320.5 H1243.3 M741.7,345.5 H1243.3 M741.7,370.5 H1243.3 M741.7,395.5 H1243.3 M741.7,420.5 H1243.3 M741.7,445.5 H1243.3 M741.7,470.5 H1243.3 M741.7,495.5 H1243.3 M741.7,520.5 H1243.3 M741.7,545.5 H1243.3 M741.7,570.5 H1243.3 M741.7,595.5 H1243.3 M741.7,620.5 H1243.3 M741.7,645.5 H1243.3 M741.7,670.5 H1243.3 M741.7,695.5 H1243.3 M741.7,720.5 H1243.3 M741.7,745.5 H1243.3 M741.7,770.5 H1243.3 M741.7,795.5 H1243.3 " stroke="#0a440a" stroke-width="1" fill="none"/>
<line x1="992.5" y1="295" x2="992.5" y2="795.5" stroke="#909090" stroke-width="1" stroke-dasharray="3.5,2.8"/>
<polyline points="742.3,545.1 744.8,552.9 747.3,560.8 749.8,568.5 752.3,576.2 754.8,583.7 757.3,591.1 759.8,598.3 762.3,605.3 764.8,612.1 767.3,618.6 769.8,624.8 772.3,630.7 774.8,636.2 777.3,641.4 779.8,646.2 782.3,650.6 784.8,654.6 787.3,658.2 789.8,661.3 792.3,664.0 794.8,666.2 797.3,667.9 799.8,669.1 802.3,669.9 804.8,670.1 807.3,669.9 809.8,669.1 812.3,667.9 814.8,666.2 817.3,664.0 819.8,661.3 822.3,658.2 824.8,654.6 827.3,650.6 829.8,646.2 832.3,641.4 834.8,636.2 837.3,630.7 839.8,624.8 842.3,618.6 844.8,612.1 847.3,605.3 849.8,598.3 852.3,591.1 854.8,583.7 857.3,576.2 859.8,568.5 862.3,560.8 864.8,552.9 867.3,545.1 869.8,537.3 872.3,529.4 874.8,521.7 877.3,514.0 879.8,506.5 882.3,499.1 884.8,491.9 887.3,484.9 889.8,478.1 892.3,471.6 894.8,465.4 897.3,459.5 899.8,454.0 902.3,448.8 904.8,444.0 907.3,439.6 909.8,435.6 912.3,432.0 914.8,428.9 917.3,426.2 919.8,424.0 922.3,422.3 924.8,421.1 927.3,420.3 929.8,420.1 932.3,420.3 934.8,421.1 937.3,422.3 939.8,424.0 942.3,426.2 944.8,428.9 947.3,432.0 949.8,435.6 952.3,439.6 954.8,444.0 957.3,448.8 959.8,454.0 962.3,459.5 964.8,465.4 967.3,471.6 969.8,478.1 972.3,484.9 974.8,491.9 977.3,499.1 979.8,506.5 982.3,514.0 984.8,521.7 987.3,529.4 989.8,537.3 992.3,545.1 994.8,552.9 997.3,560.8 999.8,568.5 1002.3,576.2 1004.8,583.7 1007.3,591.1 1009.8,598.3 1012.3,605.3 1014.8,612.1 1017.3,618.6 1019.8,624.8 1022.3,630.7 1024.8,636.2 1027.3,641.4 1029.8,646.2 1032.3,650.6 1034.8,654.6 1037.3,658.2 1039.8,661.3 1042.3,664.0 1044.8,666.2 1047.3,667.9 1049.8,669.1 1052.3,669.9 1054.8,670.1 1057.3,669.9 1059.8,669.1 1062.3,667.9 1064.8,666.2 1067.3,664.0 1069.8,661.3 1072.3,658.2 1074.8,654.6 1077.3,650.6 1079.8,646.2 1082.3,641.4 1084.8,636.2 1087.3,630.7 1089.8,624.8 1092.3,618.6 1094.8,612.1 1097.3,605.3 1099.8,598.3 1102.3,591.1 1104.8,583.7 1107.3,576.2 1109.8,568.5 1112.3,560.8 1114.8,552.9 1117.3,545.1 1119.8,537.3 1122.3,529.4 1124.8,521.7 1127.3,514.0 1129.8,506.5 1132.3,499.1 1134.8,491.9 1137.3,484.9 1139.8,478.1 1142.3,471.6 1144.8,465.4 1147.3,459.5 1149.8,454.0 1152.3,448.8 1154.8,444.0 1157.3,439.6 1159.8,435.6 1162.3,432.0 1164.8,428.9 1167.3,426.2 1169.8,424.0 1172.3,422.3 1174.8,421.1 1177.3,420.3 1179.8,420.1 1182.3,420.3 1184.8,421.1 1187.3,422.3 1189.8,424.0 1192.3,426.2 1194.8,428.9 1197.3,432.0 1199.8,435.6 1202.3,439.6 1204.8,444.0 1207.3,448.8 1209.8,454.0 1212.3,459.5 1214.8,465.4 1217.3,471.6 1219.8,478.1 1222.3,484.9 1224.8,491.9 1227.3,499.1 1229.8,506.5 1232.3,514.0 1234.8,521.7 1237.3,529.4 1239.8,537.3 1242.3,545.1" fill="none" stroke="#0a94d2" stroke-width="1.15" stroke-linejoin="miter" stroke-linejoin="round"/>
<polyline points="742.3,545.1 744.8,537.3 747.3,529.4 749.8,521.7 752.3,514.0 754.8,506.5 757.3,499.1 759.8,491.9 762.3,484.9 764.8,478.1 767.3,471.6 769.8,465.4 772.3,459.5 774.8,454.0 777.3,448.8 779.8,444.0 782.3,439.6 784.8,435.6 787.3,432.0 789.8,428.9 792.3,426.2 794.8,424.0 797.3,422.3 799.8,421.1 802.3,420.3 804.8,420.1 807.3,420.3 809.8,421.1 812.3,422.3 814.8,424.0 817.3,426.2 819.8,428.9 822.3,432.0 824.8,435.6 827.3,439.6 829.8,444.0 832.3,448.8 834.8,454.0 837.3,459.5 839.8,465.4 842.3,471.6 844.8,478.1 847.3,484.9 849.8,491.9 852.3,499.1 854.8,506.5 857.3,514.0 859.8,521.7 862.3,529.4 864.8,537.3 867.3,545.1 869.8,552.9 872.3,560.8 874.8,568.5 877.3,576.2 879.8,583.7 882.3,591.1 884.8,598.3 887.3,605.3 889.8,612.1 892.3,618.6 894.8,624.8 897.3,630.7 899.8,636.2 902.3,641.4 904.8,646.2 907.3,650.6 909.8,654.6 912.3,658.2 914.8,661.3 917.3,664.0 919.8,666.2 922.3,667.9 924.8,669.1 927.3,669.9 929.8,670.1 932.3,669.9 934.8,669.1 937.3,667.9 939.8,666.2 942.3,664.0 944.8,661.3 947.3,658.2 949.8,654.6 952.3,650.6 954.8,646.2 957.3,641.4 959.8,636.2 962.3,630.7 964.8,624.8 967.3,618.6 969.8,612.1 972.3,605.3 974.8,598.3 977.3,591.1 979.8,583.7 982.3,576.2 984.8,568.5 987.3,560.8 989.8,552.9 992.3,545.1 994.8,537.3 997.3,529.4 999.8,521.7 1002.3,514.0 1004.8,506.5 1007.3,499.1 1009.8,491.9 1012.3,484.9 1014.8,478.1 1017.3,471.6 1019.8,465.4 1022.3,459.5 1024.8,454.0 1027.3,448.8 1029.8,444.0 1032.3,439.6 1034.8,435.6 1037.3,432.0 1039.8,428.9 1042.3,426.2 1044.8,424.0 1047.3,422.3 1049.8,421.1 1052.3,420.3 1054.8,420.1 1057.3,420.3 1059.8,421.1 1062.3,422.3 1064.8,424.0 1067.3,426.2 1069.8,428.9 1072.3,432.0 1074.8,435.6 1077.3,439.6 1079.8,444.0 1082.3,448.8 1084.8,454.0 1087.3,459.5 1089.8,465.4 1092.3,471.6 1094.8,478.1 1097.3,484.9 1099.8,491.9 1102.3,499.1 1104.8,506.5 1107.3,514.0 1109.8,521.7 1112.3,529.4 1114.8,537.3 1117.3,545.1 1119.8,552.9 1122.3,560.8 1124.8,568.5 1127.3,576.2 1129.8,583.7 1132.3,591.1 1134.8,598.3 1137.3,605.3 1139.8,612.1 1142.3,618.6 1144.8,624.8 1147.3,630.7 1149.8,636.2 1152.3,641.4 1154.8,646.2 1157.3,650.6 1159.8,654.6 1162.3,658.2 1164.8,661.3 1167.3,664.0 1169.8,666.2 1172.3,667.9 1174.8,669.1 1177.3,669.9 1179.8,670.1 1182.3,669.9 1184.8,669.1 1187.3,667.9 1189.8,666.2 1192.3,664.0 1194.8,661.3 1197.3,658.2 1199.8,654.6 1202.3,650.6 1204.8,646.2 1207.3,641.4 1209.8,636.2 1212.3,630.7 1214.8,624.8 1217.3,618.6 1219.8,612.1 1222.3,605.3 1224.8,598.3 1227.3,591.1 1229.8,583.7 1232.3,576.2 1234.8,568.5 1237.3,560.8 1239.8,552.9 1242.3,545.1" fill="none" stroke="#dcd400" stroke-width="1.15" stroke-linejoin="miter" stroke-linejoin="round"/>
<pattern id="dith" width="2" height="2" patternUnits="userSpaceOnUse"><rect width="2" height="2" fill="#ffffff"/><rect width="1" height="1" fill="#ececec"/><rect x="1" y="1" width="1" height="1" fill="#ececec"/></pattern>
<rect x="738" y="799.5" width="508.5" height="21" fill="url(#dith)"/>
<rect x="738.2" y="799.5" width="22.3" height="19.6" fill="#6a6a6a"/>
<rect x="738.2" y="799.5" width="21.0" height="18.6" fill="#fdfdfd"/>
<rect x="739.7" y="801" width="19.5" height="17.1" fill="#a0a0a0"/>
<rect x="739.7" y="801" width="18.2" height="15.9" fill="#f0f0f0"/>
<path d="M745.4000000000001,809.2 L750.9000000000001,804.6 V813.8 Z" fill="#000"/>
<rect x="1223.8" y="799.5" width="21.900000000000137" height="19.6" fill="#6a6a6a"/>
<rect x="1223.8" y="799.5" width="20.600000000000136" height="18.6" fill="#fdfdfd"/>
<rect x="1225.3" y="801" width="19.100000000000136" height="17.1" fill="#a0a0a0"/>
<rect x="1225.3" y="801" width="17.800000000000136" height="15.9" fill="#f0f0f0"/>
<path d="M1237.5,809.2 L1231.8999999999999,804.6 V813.8 Z" fill="#000"/>
<rect x="1213" y="799.5" width="10" height="19.6" fill="#8a8a8a"/>
<rect x="1213" y="799.5" width="9" height="18.6" fill="#fdfdfd"/>
<rect x="1214.3" y="801" width="7.7" height="17.1" fill="#a8a8a8"/>
<rect x="1214.3" y="801" width="6.6" height="16" fill="#eeeeee"/>
<rect x="1245" y="291.6" width="354" height="540" fill="#a9a9a9"/>
<rect x="1245.1" y="291.8" width="2" height="540" fill="#404040"/>
<rect x="1247.3" y="291.8" width="1.3" height="540" fill="#ececec"/>
<rect x="1598" y="291.6" width="1.2" height="540" fill="#202020"/>
<rect x="1363.0" y="291.8" width="1.3" height="540" fill="#101010"/>
<rect x="1364.6" y="291.8" width="2.1" height="540" fill="#e8e8e8"/>
<rect x="1480.6000000000001" y="291.8" width="1.3" height="540" fill="#101010"/>
<rect x="1482.2" y="291.8" width="2.1" height="540" fill="#e8e8e8"/>
<rect x="1247" y="323.2" width="351" height="1.4" fill="#3c3c3c"/>
<rect x="1247" y="325.0" width="351" height="1.2" fill="#f0f0f0"/>
<rect x="1247" y="554.8" width="351" height="1.2" fill="#2c2c2c"/>
<rect x="1247" y="556.1" width="351" height="1.1" fill="#e4e4e4"/>
<rect x="1247" y="588.2" width="351" height="1.4" fill="#3c3c3c"/>
<rect x="1247" y="590.0" width="351" height="1.2" fill="#f0f0f0"/>
<rect x="1363.0" y="291.8" width="1.3" height="540" fill="#101010"/>
<rect x="1480.6000000000001" y="291.8" width="1.3" height="540" fill="#101010"/>
<rect x="1245.1" y="291.8" width="2" height="540" fill="#404040"/>
<text x="1421.8" y="314.8" font-size="15" fill="#f8f820" text-anchor="middle" font-weight="bold" font-style="normal" textLength="70.6" lengthAdjust="spacingAndGlyphs">Channel A</text>
<text x="1401.7" y="337.0" font-size="11" fill="#2c2c2c" text-anchor="middle" font-weight="normal" font-style="normal" >Position</text>
<rect x="1378.3" y="340.4" width="49.700000000000045" height="100.20000000000005" fill="#f6f6f6"/>
<rect x="1379.2" y="341.29999999999995" width="49.00000000000004" height="99.50000000000004" fill="#0c0c0c"/>
<path d="M1379.2,439.6 V341.29999999999995 H1427.0 V342.59999999999997 H1380.5 V439.6 Z" fill="#0c0c0c"/>
<rect x="1380.5" y="342.59999999999997" width="46.50000000000004" height="97.00000000000004" fill="#ececec"/>
<rect x="1380.5" y="342.59999999999997" width="45.40000000000005" height="95.90000000000005" fill="#b2b2b2"/>
<rect x="1388.4" y="343.9" width="30.09999999999991" height="93.10000000000002" fill="url(#rollV)"/>
<rect x="1417.6" y="343.9" width="1" height="93.10000000000002" fill="#111"/>
<line x1="1388.7" y1="343.9" x2="1388.7" y2="437" stroke="#444" stroke-width="0.8" stroke-dasharray="2,3" opacity="0.6"/>
<path d="M1389.0,349.0 h2.6 M1417.5,349.0 h-2.6 M1389.0,354.0 h2.6 M1417.5,354.0 h-2.6 M1389.0,359.0 h2.6 M1417.5,359.0 h-2.6 M1389.0,364.0 h5 M1417.5,364.0 h-5 M1389.0,369.0 h2.6 M1417.5,369.0 h-2.6 M1389.0,374.0 h2.6 M1417.5,374.0 h-2.6 M1389.0,379.0 h2.6 M1417.5,379.0 h-2.6 M1389.0,384.0 h2.6 M1417.5,384.0 h-2.6 M1389.0,389.0 h5 M1417.5,389.0 h-5 M1389.0,394.0 h2.6 M1417.5,394.0 h-2.6 M1389.0,399.0 h2.6 M1417.5,399.0 h-2.6 M1389.0,404.0 h2.6 M1417.5,404.0 h-2.6 M1389.0,409.0 h2.6 M1417.5,409.0 h-2.6 M1389.0,414.0 h5 M1417.5,414.0 h-5 M1389.0,419.0 h2.6 M1417.5,419.0 h-2.6 M1389.0,424.0 h2.6 M1417.5,424.0 h-2.6 M1389.0,429.0 h2.6 M1417.5,429.0 h-2.6 M1389.0,434.0 h2.6 M1417.5,434.0 h-2.6 " stroke="#6c6c6c" stroke-width="1.25" fill="none"/>
<text x="1403.2" y="368.2" font-size="12" fill="#1c1c1c" text-anchor="middle" font-weight="normal" font-style="normal" >-10</text>
<text x="1403.2" y="393.2" font-size="12" fill="#1c1c1c" text-anchor="middle" font-weight="normal" font-style="normal" >0</text>
<text x="1403.2" y="418.2" font-size="12" fill="#1c1c1c" text-anchor="middle" font-weight="normal" font-style="normal" >10</text>
<path d="M1380.3,383 L1386.9,389 L1380.3,395 Z" fill="#ff0000"/>
<path d="M1425.5,383 L1418.9,389 L1425.5,395 Z" fill="#ff0000"/>
<path d="M1372.1,374.6 l4.2,8.8 h-8.4 Z M1372.1,402.6 l4.2,-8.8 h-8.4 Z" fill="#f8f820"/>
<line x1="1372.1" y1="380.6" x2="1372.1" y2="396.6" stroke="#f8f820" stroke-width="1.5"/>
<text x="1458.4" y="344.4" font-size="11" fill="#2c2c2c" text-anchor="end" font-weight="normal" font-style="normal" >AC</text>
<text x="1458.4" y="362.0" font-size="11" fill="#2c2c2c" text-anchor="end" font-weight="normal" font-style="normal" >DC</text>
<text x="1458.4" y="379.6" font-size="11" fill="#2c2c2c" text-anchor="end" font-weight="normal" font-style="normal" >GND</text>
<text x="1458.4" y="397.2" font-size="11" fill="#2c2c2c" text-anchor="end" font-weight="normal" font-style="normal" >OFF</text>
<rect x="1460.4" y="327" width="18.59999999999991" height="79.60000000000002" fill="#f6f6f6"/>
<rect x="1461.3000000000002" y="327.9" width="17.89999999999991" height="78.90000000000002" fill="#505050"/>
<path d="M1461.3000000000002,405.6 V327.9 H1478 V329.2 H1462.6000000000001 V405.6 Z" fill="#0c0c0c"/>
<rect x="1462.6000000000001" y="329.2" width="15.39999999999991" height="76.40000000000002" fill="#ececec"/>
<rect x="1462.6000000000001" y="329.2" width="14.299999999999908" height="75.30000000000003" fill="#adadad"/>
<rect x="1468.3" y="334.6" width="2.3" height="64.10000000000002" fill="#000"/>
<rect x="1470.6" y="335.6" width="1" height="64.10000000000002" fill="#f0f0f0"/>
<rect x="1463.2" y="329.9" width="13.399999999999864" height="17.600000000000023" fill="#5a5a5a"/>
<rect x="1463.2" y="329.9" width="12.399999999999864" height="16.600000000000023" fill="#f6f6f6"/>
<rect x="1464.2" y="330.9" width="11.399999999999864" height="15.600000000000023" fill="#c4c4c4"/>
<path d="M1465.4,333.1 H1474.0 M1465.4,337.0 H1474.0 M1465.4,341.0 H1474.0 M1465.4,344.9 H1474.0 " stroke="#4c4c4c" stroke-width="1.3" fill="none"/>
<path d="M1465.4,333.1 H1474.0 M1465.4,337.0 H1474.0 M1465.4,341.0 H1474.0 M1465.4,344.9 H1474.0 " stroke="#f4f4f4" stroke-width="1.2" fill="none" transform="translate(0,1.6)"/>
<rect x="1460.4" y="408.6" width="18.5" height="17.599999999999966" fill="#282828"/>
<rect x="1460.4" y="408.6" width="17.2" height="16.299999999999965" fill="#c8c8c8"/>
<rect x="1461.6000000000001" y="409.8" width="16.0" height="15.099999999999966" fill="url(#btnDark)"/>
<text x="1458.4" y="421.0" font-size="11" fill="#2c2c2c" text-anchor="end" font-weight="normal" font-style="normal" >Invert</text>
<rect x="1460.4" y="428.6" width="18.5" height="17.69999999999999" fill="#282828"/>
<rect x="1460.4" y="428.6" width="17.2" height="16.399999999999988" fill="#c8c8c8"/>
<rect x="1461.6000000000001" y="429.8" width="16.0" height="15.199999999999989" fill="url(#btnDark)"/>
<text x="1458.4" y="442.2" font-size="11" fill="#2c2c2c" text-anchor="end" font-weight="normal" font-style="normal" >A+B</text>
<clipPath id="cp1423497"><path d="M1368.4,552.6 V497.7 A55.1,54.0 0 0 1 1478.6,497.7 V552.6 Z"/></clipPath>
<g clip-path="url(#cp1423497)">
<rect x="1367.4" y="441.59999999999997" width="112.2" height="112.00000000000003" fill="#ffffff"/>
<rect x="1399.4" y="497.7" width="47.899999999999864" height="56.900000000000034" fill="#a9a9a9"/>
<rect x="1398.2" y="497.7" width="1.3" height="56.900000000000034" fill="#5a5a5a"/>
<rect x="1447.2" y="497.7" width="1.3" height="56.900000000000034" fill="#5a5a5a"/>
<line x1="1440.5" y1="471.9" x2="1457.7" y2="442.6" stroke="#606060" stroke-width="4.7"/>
<line x1="1440.5" y1="471.9" x2="1457.7" y2="442.6" stroke="#a9a9a9" stroke-width="2.5"/>
</g>
<path d="M1368.4,552.6 V497.7 A55.1,54.0 0 0 1 1478.6,497.7 V552.6" fill="none" stroke="#5a5a5a" stroke-width="1.3"/>
<path d="M1368.4,552.6 H1398.8000000000002 M1447.8999999999999,552.6 H1478.6" fill="none" stroke="#5a5a5a" stroke-width="1.4"/>
<text x="1457.6" y="534.3" font-size="8.5" fill="#3a3a3a" text-anchor="middle" font-weight="normal" font-style="normal" >2</text>
<text x="1468.4" y="519.7" font-size="8.5" fill="#3a3a3a" text-anchor="middle" font-weight="normal" font-style="normal" >5</text>
<text x="1472.4" y="501.0" font-size="8.5" fill="#3a3a3a" text-anchor="middle" font-weight="normal" font-style="normal" >10</text>
<text x="1469.2" y="483.7" font-size="8.5" fill="#3a3a3a" text-anchor="middle" font-weight="normal" font-style="normal" >20</text>
<text x="1458.7" y="467.0" font-size="8.5" fill="#3a3a3a" text-anchor="middle" font-weight="normal" font-style="normal" >50</text>
<text x="1441.0" y="455.8" font-size="8.5" fill="#3a3a3a" text-anchor="middle" font-weight="normal" font-style="normal" >0.1</text>
<text x="1424.3" y="452.3" font-size="8.5" fill="#3a3a3a" text-anchor="middle" font-weight="normal" font-style="normal" >0.2</text>
<text x="1405.6" y="455.8" font-size="8.5" fill="#3a3a3a" text-anchor="middle" font-weight="normal" font-style="normal" >0.5</text>
<text x="1389.0" y="467.4" font-size="8.5" fill="#3a3a3a" text-anchor="middle" font-weight="normal" font-style="normal" >1</text>
<text x="1378.7" y="483.7" font-size="8.5" fill="#3a3a3a" text-anchor="middle" font-weight="normal" font-style="normal" >2</text>
<text x="1374.6" y="501.0" font-size="8.5" fill="#3a3a3a" text-anchor="middle" font-weight="normal" font-style="normal" >5</text>
<text x="1377.0" y="519.3" font-size="8.5" fill="#3a3a3a" text-anchor="middle" font-weight="normal" font-style="normal" >10</text>
<text x="1387.0" y="534.3" font-size="8.5" fill="#3a3a3a" text-anchor="middle" font-weight="normal" font-style="normal" >20</text>
<path d="M1449.3,523.5 L1453.6,527.8 M1457.2,511.7 L1462.8,514.0 M1460.0,497.7 L1466.0,497.7 M1457.2,483.7 L1462.8,481.4 M1449.3,471.9 L1453.6,467.6 M1437.5,464.0 L1439.8,458.4 M1423.5,461.2 L1423.5,455.2 M1409.5,464.0 L1407.2,458.4 M1397.7,471.9 L1393.4,467.6 M1389.8,483.7 L1384.2,481.4 M1387.0,497.7 L1381.0,497.7 M1389.8,511.7 L1384.2,514.0 M1397.7,523.5 L1393.4,527.8 " stroke="#4a4a4a" stroke-width="1" fill="none"/>
<text x="1383.0" y="546.7" font-size="11.5" fill="#2c2c2c" text-anchor="middle" font-weight="normal" font-style="normal" >V</text>
<text x="1463.5" y="546.7" font-size="11.5" fill="#2c2c2c" text-anchor="middle" font-weight="normal" font-style="normal" >mV</text>
<circle cx="1424.0" cy="498.3" r="37.5" fill="#5c5c5c"/>
<circle cx="1423.5" cy="497.7" r="37" fill="url(#dialOuter)"/>
<circle cx="1423.6" cy="498.0" r="20.2" fill="url(#recess)"/>
<circle cx="1423.1" cy="497.2" r="17.7" fill="url(#dialInner)"/>
<path d="M1410.3,465.8 L1420.6,473.5 L1408.4,478.5 Z" fill="#f8f820" stroke="#f8f820" stroke-width="0.8" stroke-linejoin="round"/>
<path d="M1433.8,502.5 L1435.4,509.6 L1428.3,507.2 Z" fill="#f8f820" stroke="#f8f820" stroke-width="0.8" stroke-linejoin="round"/>
<rect x="1402.1" y="537.0" width="43.600000000000136" height="15.200000000000045" fill="#101010"/>
<rect x="1403.3999999999999" y="538.3" width="42.30000000000014" height="13.900000000000045" fill="#ffffff"/>
<text x="1404.3" y="546.6" font-size="10.5" fill="#3838c0" text-anchor="start" font-weight="normal" font-style="normal" >0.5</text>
<text x="1539.4" y="314.8" font-size="15" fill="#e8108c" text-anchor="middle" font-weight="bold" font-style="normal" textLength="70.6" lengthAdjust="spacingAndGlyphs">Channel C</text>
<text x="1519.3" y="337.0" font-size="11" fill="#2c2c2c" text-anchor="middle" font-weight="normal" font-style="normal" >Position</text>
<rect x="1495.8999999999999" y="340.4" width="49.700000000000045" height="100.20000000000005" fill="#f6f6f6"/>
<rect x="1496.8" y="341.29999999999995" width="49.00000000000004" height="99.50000000000004" fill="#0c0c0c"/>
<path d="M1496.8,439.6 V341.29999999999995 H1544.6 V342.59999999999997 H1498.1 V439.6 Z" fill="#0c0c0c"/>
<rect x="1498.1" y="342.59999999999997" width="46.50000000000004" height="97.00000000000004" fill="#ececec"/>
<rect x="1498.1" y="342.59999999999997" width="45.40000000000005" height="95.90000000000005" fill="#b2b2b2"/>
<rect x="1506.0" y="343.9" width="30.09999999999991" height="93.10000000000002" fill="url(#rollV)"/>
<rect x="1535.1999999999998" y="343.9" width="1" height="93.10000000000002" fill="#111"/>
<line x1="1506.3" y1="343.9" x2="1506.3" y2="437" stroke="#444" stroke-width="0.8" stroke-dasharray="2,3" opacity="0.6"/>
<path d="M1506.6,349.0 h2.6 M1535.1,349.0 h-2.6 M1506.6,354.0 h2.6 M1535.1,354.0 h-2.6 M1506.6,359.0 h2.6 M1535.1,359.0 h-2.6 M1506.6,364.0 h5 M1535.1,364.0 h-5 M1506.6,369.0 h2.6 M1535.1,369.0 h-2.6 M1506.6,374.0 h2.6 M1535.1,374.0 h-2.6 M1506.6,379.0 h2.6 M1535.1,379.0 h-2.6 M1506.6,384.0 h2.6 M1535.1,384.0 h-2.6 M1506.6,389.0 h5 M1535.1,389.0 h-5 M1506.6,394.0 h2.6 M1535.1,394.0 h-2.6 M1506.6,399.0 h2.6 M1535.1,399.0 h-2.6 M1506.6,404.0 h2.6 M1535.1,404.0 h-2.6 M1506.6,409.0 h2.6 M1535.1,409.0 h-2.6 M1506.6,414.0 h5 M1535.1,414.0 h-5 M1506.6,419.0 h2.6 M1535.1,419.0 h-2.6 M1506.6,424.0 h2.6 M1535.1,424.0 h-2.6 M1506.6,429.0 h2.6 M1535.1,429.0 h-2.6 M1506.6,434.0 h2.6 M1535.1,434.0 h-2.6 " stroke="#6c6c6c" stroke-width="1.25" fill="none"/>
<text x="1520.8" y="368.2" font-size="12" fill="#1c1c1c" text-anchor="middle" font-weight="normal" font-style="normal" >-50</text>
<text x="1520.8" y="393.2" font-size="12" fill="#1c1c1c" text-anchor="middle" font-weight="normal" font-style="normal" >-40</text>
<text x="1520.8" y="418.2" font-size="12" fill="#1c1c1c" text-anchor="middle" font-weight="normal" font-style="normal" >-30</text>
<path d="M1497.8999999999999,383 L1504.5,389 L1497.8999999999999,395 Z" fill="#ff0000"/>
<path d="M1543.1,383 L1536.5,389 L1543.1,395 Z" fill="#ff0000"/>
<path d="M1489.6999999999998,374.6 l4.2,8.8 h-8.4 Z M1489.6999999999998,402.6 l4.2,-8.8 h-8.4 Z" fill="#e8108c"/>
<line x1="1489.6999999999998" y1="380.6" x2="1489.6999999999998" y2="396.6" stroke="#e8108c" stroke-width="1.5"/>
<text x="1576.0" y="344.4" font-size="11" fill="#2c2c2c" text-anchor="end" font-weight="normal" font-style="normal" >AC</text>
<text x="1576.0" y="362.0" font-size="11" fill="#2c2c2c" text-anchor="end" font-weight="normal" font-style="normal" >DC</text>
<text x="1576.0" y="379.6" font-size="11" fill="#2c2c2c" text-anchor="end" font-weight="normal" font-style="normal" >GND</text>
<text x="1576.0" y="397.2" font-size="11" fill="#2c2c2c" text-anchor="end" font-weight="normal" font-style="normal" >OFF</text>
<rect x="1578.0" y="327" width="18.59999999999991" height="79.60000000000002" fill="#f6f6f6"/>
<rect x="1578.9" y="327.9" width="17.89999999999991" height="78.90000000000002" fill="#505050"/>
<path d="M1578.9,405.6 V327.9 H1595.6 V329.2 H1580.2 V405.6 Z" fill="#0c0c0c"/>
<rect x="1580.2" y="329.2" width="15.39999999999991" height="76.40000000000002" fill="#ececec"/>
<rect x="1580.2" y="329.2" width="14.299999999999908" height="75.30000000000003" fill="#adadad"/>
<rect x="1585.8999999999999" y="334.6" width="2.3" height="64.10000000000002" fill="#000"/>
<rect x="1588.1999999999998" y="335.6" width="1" height="64.10000000000002" fill="#f0f0f0"/>
<rect x="1580.8" y="386.2" width="13.399999999999864" height="17.600000000000023" fill="#5a5a5a"/>
<rect x="1580.8" y="386.2" width="12.399999999999864" height="16.600000000000023" fill="#f6f6f6"/>
<rect x="1581.8" y="387.2" width="11.399999999999864" height="15.600000000000023" fill="#c4c4c4"/>
<path d="M1583.0,389.4 H1591.6 M1583.0,393.3 H1591.6 M1583.0,397.3 H1591.6 M1583.0,401.2 H1591.6 " stroke="#4c4c4c" stroke-width="1.3" fill="none"/>
<path d="M1583.0,389.4 H1591.6 M1583.0,393.3 H1591.6 M1583.0,397.3 H1591.6 M1583.0,401.2 H1591.6 " stroke="#f4f4f4" stroke-width="1.2" fill="none" transform="translate(0,1.6)"/>
<rect x="1578.0" y="408.6" width="18.5" height="17.599999999999966" fill="#282828"/>
<rect x="1578.0" y="408.6" width="17.2" height="16.299999999999965" fill="#c8c8c8"/>
<rect x="1579.2" y="409.8" width="16.0" height="15.099999999999966" fill="url(#btnDark)"/>
<text x="1576.0" y="421.0" font-size="11" fill="#2c2c2c" text-anchor="end" font-weight="normal" font-style="normal" >Invert</text>
<rect x="1578.0" y="428.6" width="18.5" height="17.69999999999999" fill="#282828"/>
<rect x="1578.0" y="428.6" width="17.2" height="16.399999999999988" fill="#c8c8c8"/>
<rect x="1579.2" y="429.8" width="16.0" height="15.199999999999989" fill="url(#btnDark)"/>
<text x="1576.0" y="442.2" font-size="11" fill="#2c2c2c" text-anchor="end" font-weight="normal" font-style="normal" >C+D</text>
<clipPath id="cp1541497"><path d="M1486.0,552.6 V497.7 A55.1,54.0 0 0 1 1596.1999999999998,497.7 V552.6 Z"/></clipPath>
<g clip-path="url(#cp1541497)">
<rect x="1485.0" y="441.59999999999997" width="112.2" height="112.00000000000003" fill="#ffffff"/>
<rect x="1517.0" y="497.7" width="47.899999999999864" height="56.900000000000034" fill="#a9a9a9"/>
<rect x="1515.8" y="497.7" width="1.3" height="56.900000000000034" fill="#5a5a5a"/>
<rect x="1564.8" y="497.7" width="1.3" height="56.900000000000034" fill="#5a5a5a"/>
<line x1="1558.1" y1="471.9" x2="1575.3" y2="442.6" stroke="#606060" stroke-width="4.7"/>
<line x1="1558.1" y1="471.9" x2="1575.3" y2="442.6" stroke="#a9a9a9" stroke-width="2.5"/>
</g>
<path d="M1486.0,552.6 V497.7 A55.1,54.0 0 0 1 1596.1999999999998,497.7 V552.6" fill="none" stroke="#5a5a5a" stroke-width="1.3"/>
<path d="M1486.0,552.6 H1516.4 M1565.4999999999998,552.6 H1596.1999999999998" fill="none" stroke="#5a5a5a" stroke-width="1.4"/>
<text x="1575.2" y="534.3" font-size="8.5" fill="#3a3a3a" text-anchor="middle" font-weight="normal" font-style="normal" >2</text>
<text x="1586.0" y="519.7" font-size="8.5" fill="#3a3a3a" text-anchor="middle" font-weight="normal" font-style="normal" >5</text>
<text x="1590.0" y="501.0" font-size="8.5" fill="#3a3a3a" text-anchor="middle" font-weight="normal" font-style="normal" >10</text>
<text x="1586.8" y="483.7" font-size="8.5" fill="#3a3a3a" text-anchor="middle" font-weight="normal" font-style="normal" >20</text>
<text x="1576.3" y="467.0" font-size="8.5" fill="#3a3a3a" text-anchor="middle" font-weight="normal" font-style="normal" >50</text>
<text x="1558.6" y="455.8" font-size="8.5" fill="#3a3a3a" text-anchor="middle" font-weight="normal" font-style="normal" >0.1</text>
<text x="1541.9" y="452.3" font-size="8.5" fill="#3a3a3a" text-anchor="middle" font-weight="normal" font-style="normal" >0.2</text>
<text x="1523.2" y="455.8" font-size="8.5" fill="#3a3a3a" text-anchor="middle" font-weight="normal" font-style="normal" >0.5</text>
<text x="1506.6" y="467.4" font-size="8.5" fill="#3a3a3a" text-anchor="middle" font-weight="normal" font-style="normal" >1</text>
<text x="1496.3" y="483.7" font-size="8.5" fill="#3a3a3a" text-anchor="middle" font-weight="normal" font-style="normal" >2</text>
<text x="1492.2" y="501.0" font-size="8.5" fill="#3a3a3a" text-anchor="middle" font-weight="normal" font-style="normal" >5</text>
<text x="1494.6" y="519.3" font-size="8.5" fill="#3a3a3a" text-anchor="middle" font-weight="normal" font-style="normal" >10</text>
<text x="1504.6" y="534.3" font-size="8.5" fill="#3a3a3a" text-anchor="middle" font-weight="normal" font-style="normal" >20</text>
<path d="M1566.9,523.5 L1571.2,527.8 M1574.8,511.7 L1580.4,514.0 M1577.6,497.7 L1583.6,497.7 M1574.8,483.7 L1580.4,481.4 M1566.9,471.9 L1571.2,467.6 M1555.1,464.0 L1557.4,458.4 M1541.1,461.2 L1541.1,455.2 M1527.1,464.0 L1524.8,458.4 M1515.3,471.9 L1511.0,467.6 M1507.4,483.7 L1501.8,481.4 M1504.6,497.7 L1498.6,497.7 M1507.4,511.7 L1501.8,514.0 M1515.3,523.5 L1511.0,527.8 " stroke="#4a4a4a" stroke-width="1" fill="none"/>
<text x="1500.6" y="546.7" font-size="11.5" fill="#2c2c2c" text-anchor="middle" font-weight="normal" font-style="normal" >V</text>
<text x="1581.1" y="546.7" font-size="11.5" fill="#2c2c2c" text-anchor="middle" font-weight="normal" font-style="normal" >mV</text>
<circle cx="1541.6" cy="498.3" r="37.5" fill="#5c5c5c"/>
<circle cx="1541.1" cy="497.7" r="37" fill="url(#dialOuter)"/>
<circle cx="1541.1999999999998" cy="498.0" r="20.2" fill="url(#recess)"/>
<circle cx="1540.6999999999998" cy="497.2" r="17.7" fill="url(#dialInner)"/>
<path d="M1506.6,497.7 L1517.6,491.1 L1517.6,504.3 Z" fill="#e8108c" stroke="#e8108c" stroke-width="0.8" stroke-linejoin="round"/>
<path d="M1551.4,502.5 L1553.0,509.6 L1545.9,507.2 Z" fill="#e8108c" stroke="#e8108c" stroke-width="0.8" stroke-linejoin="round"/>
<rect x="1519.6999999999998" y="537.0" width="43.600000000000136" height="15.200000000000045" fill="#101010"/>
<rect x="1520.9999999999998" y="538.3" width="42.30000000000014" height="13.900000000000045" fill="#ffffff"/>
<text x="1521.9" y="546.6" font-size="10.5" fill="#3838c0" text-anchor="start" font-weight="normal" font-style="normal" >5</text>
<text x="1421.8" y="579.8" font-size="15" fill="#189cf0" text-anchor="middle" font-weight="bold" font-style="normal" textLength="70.6" lengthAdjust="spacingAndGlyphs">Channel B</text>
<text x="1401.7" y="602.0" font-size="11" fill="#2c2c2c" text-anchor="middle" font-weight="normal" font-style="normal" >Position</text>
<rect x="1378.3" y="605.4" width="49.700000000000045" height="100.20000000000005" fill="#f6f6f6"/>
<rect x="1379.2" y="606.3" width="49.00000000000004" height="99.50000000000004" fill="#0c0c0c"/>
<path d="M1379.2,704.6 V606.3 H1427.0 V607.6 H1380.5 V704.6 Z" fill="#0c0c0c"/>
<rect x="1380.5" y="607.6" width="46.50000000000004" height="97.00000000000004" fill="#ececec"/>
<rect x="1380.5" y="607.6" width="45.40000000000005" height="95.90000000000005" fill="#b2b2b2"/>
<rect x="1388.4" y="608.9" width="30.09999999999991" height="93.10000000000002" fill="url(#rollV)"/>
<rect x="1417.6" y="608.9" width="1" height="93.10000000000002" fill="#111"/>
<line x1="1388.7" y1="608.9" x2="1388.7" y2="702" stroke="#444" stroke-width="0.8" stroke-dasharray="2,3" opacity="0.6"/>
<path d="M1389.0,614.0 h2.6 M1417.5,614.0 h-2.6 M1389.0,619.0 h2.6 M1417.5,619.0 h-2.6 M1389.0,624.0 h2.6 M1417.5,624.0 h-2.6 M1389.0,629.0 h5 M1417.5,629.0 h-5 M1389.0,634.0 h2.6 M1417.5,634.0 h-2.6 M1389.0,639.0 h2.6 M1417.5,639.0 h-2.6 M1389.0,644.0 h2.6 M1417.5,644.0 h-2.6 M1389.0,649.0 h2.6 M1417.5,649.0 h-2.6 M1389.0,654.0 h5 M1417.5,654.0 h-5 M1389.0,659.0 h2.6 M1417.5,659.0 h-2.6 M1389.0,664.0 h2.6 M1417.5,664.0 h-2.6 M1389.0,669.0 h2.6 M1417.5,669.0 h-2.6 M1389.0,674.0 h2.6 M1417.5,674.0 h-2.6 M1389.0,679.0 h5 M1417.5,679.0 h-5 M1389.0,684.0 h2.6 M1417.5,684.0 h-2.6 M1389.0,689.0 h2.6 M1417.5,689.0 h-2.6 M1389.0,694.0 h2.6 M1417.5,694.0 h-2.6 M1389.0,699.0 h2.6 M1417.5,699.0 h-2.6 " stroke="#6c6c6c" stroke-width="1.25" fill="none"/>
<text x="1403.2" y="633.2" font-size="12" fill="#1c1c1c" text-anchor="middle" font-weight="normal" font-style="normal" >-10</text>
<text x="1403.2" y="658.2" font-size="12" fill="#1c1c1c" text-anchor="middle" font-weight="normal" font-style="normal" >0</text>
<text x="1403.2" y="683.2" font-size="12" fill="#1c1c1c" text-anchor="middle" font-weight="normal" font-style="normal" >10</text>
<path d="M1380.3,648 L1386.9,654 L1380.3,660 Z" fill="#ff0000"/>
<path d="M1425.5,648 L1418.9,654 L1425.5,660 Z" fill="#ff0000"/>
<path d="M1372.1,639.6 l4.2,8.8 h-8.4 Z M1372.1,667.6 l4.2,-8.8 h-8.4 Z" fill="#189cf0"/>
<line x1="1372.1" y1="645.6" x2="1372.1" y2="661.6" stroke="#189cf0" stroke-width="1.5"/>
<text x="1458.4" y="609.4" font-size="11" fill="#2c2c2c" text-anchor="end" font-weight="normal" font-style="normal" >AC</text>
<text x="1458.4" y="627.0" font-size="11" fill="#2c2c2c" text-anchor="end" font-weight="normal" font-style="normal" >DC</text>
<text x="1458.4" y="644.6" font-size="11" fill="#2c2c2c" text-anchor="end" font-weight="normal" font-style="normal" >GND</text>
<text x="1458.4" y="662.2" font-size="11" fill="#2c2c2c" text-anchor="end" font-weight="normal" font-style="normal" >OFF</text>
<rect x="1460.4" y="592" width="18.59999999999991" height="79.60000000000002" fill="#f6f6f6"/>
<rect x="1461.3000000000002" y="592.9" width="17.89999999999991" height="78.90000000000002" fill="#505050"/>
<path d="M1461.3000000000002,670.6 V592.9 H1478 V594.2 H1462.6000000000001 V670.6 Z" fill="#0c0c0c"/>
<rect x="1462.6000000000001" y="594.2" width="15.39999999999991" height="76.40000000000002" fill="#ececec"/>
<rect x="1462.6000000000001" y="594.2" width="14.299999999999908" height="75.30000000000003" fill="#adadad"/>
<rect x="1468.3" y="599.6" width="2.3" height="64.10000000000002" fill="#000"/>
<rect x="1470.6" y="600.6" width="1" height="64.10000000000002" fill="#f0f0f0"/>
<rect x="1463.2" y="594.9" width="13.399999999999864" height="17.600000000000023" fill="#5a5a5a"/>
<rect x="1463.2" y="594.9" width="12.399999999999864" height="16.600000000000023" fill="#f6f6f6"/>
<rect x="1464.2" y="595.9" width="11.399999999999864" height="15.600000000000023" fill="#c4c4c4"/>
<path d="M1465.4,598.1 H1474.0 M1465.4,602.1 H1474.0 M1465.4,606.0 H1474.0 M1465.4,610.0 H1474.0 " stroke="#4c4c4c" stroke-width="1.3" fill="none"/>
<path d="M1465.4,598.1 H1474.0 M1465.4,602.1 H1474.0 M1465.4,606.0 H1474.0 M1465.4,610.0 H1474.0 " stroke="#f4f4f4" stroke-width="1.2" fill="none" transform="translate(0,1.6)"/>
<rect x="1460.4" y="673.6" width="18.5" height="17.600000000000023" fill="#282828"/>
<rect x="1460.4" y="673.6" width="17.2" height="16.300000000000022" fill="#c8c8c8"/>
<rect x="1461.6000000000001" y="674.8000000000001" width="16.0" height="15.100000000000023" fill="url(#btnDark)"/>
<text x="1458.4" y="686.0" font-size="11" fill="#2c2c2c" text-anchor="end" font-weight="normal" font-style="normal" >Invert</text>
<clipPath id="cp1423762"><path d="M1368.4,817.6000000000001 V762.7 A55.1,54.0 0 0 1 1478.6,762.7 V817.6000000000001 Z"/></clipPath>
<g clip-path="url(#cp1423762)">
<rect x="1367.4" y="706.6" width="112.2" height="112.00000000000009" fill="#ffffff"/>
<rect x="1399.4" y="762.7" width="47.899999999999864" height="56.90000000000009" fill="#a9a9a9"/>
<rect x="1398.2" y="762.7" width="1.3" height="56.90000000000009" fill="#5a5a5a"/>
<rect x="1447.2" y="762.7" width="1.3" height="56.90000000000009" fill="#5a5a5a"/>
<line x1="1440.5" y1="736.9" x2="1457.7" y2="707.6" stroke="#606060" stroke-width="4.7"/>
<line x1="1440.5" y1="736.9" x2="1457.7" y2="707.6" stroke="#a9a9a9" stroke-width="2.5"/>
</g>
<path d="M1368.4,817.6000000000001 V762.7 A55.1,54.0 0 0 1 1478.6,762.7 V817.6000000000001" fill="none" stroke="#5a5a5a" stroke-width="1.3"/>
<path d="M1368.4,817.6000000000001 H1398.8000000000002 M1447.8999999999999,817.6000000000001 H1478.6" fill="none" stroke="#5a5a5a" stroke-width="1.4"/>
<text x="1457.6" y="799.3" font-size="8.5" fill="#3a3a3a" text-anchor="middle" font-weight="normal" font-style="normal" >2</text>
<text x="1468.4" y="784.7" font-size="8.5" fill="#3a3a3a" text-anchor="middle" font-weight="normal" font-style="normal" >5</text>
<text x="1472.4" y="766.0" font-size="8.5" fill="#3a3a3a" text-anchor="middle" font-weight="normal" font-style="normal" >10</text>
<text x="1469.2" y="748.7" font-size="8.5" fill="#3a3a3a" text-anchor="middle" font-weight="normal" font-style="normal" >20</text>
<text x="1458.7" y="732.0" font-size="8.5" fill="#3a3a3a" text-anchor="middle" font-weight="normal" font-style="normal" >50</text>
<text x="1441.0" y="720.8" font-size="8.5" fill="#3a3a3a" text-anchor="middle" font-weight="normal" font-style="normal" >0.1</text>
<text x="1424.3" y="717.3" font-size="8.5" fill="#3a3a3a" text-anchor="middle" font-weight="normal" font-style="normal" >0.2</text>
<text x="1405.6" y="720.8" font-size="8.5" fill="#3a3a3a" text-anchor="middle" font-weight="normal" font-style="normal" >0.5</text>
<text x="1389.0" y="732.4" font-size="8.5" fill="#3a3a3a" text-anchor="middle" font-weight="normal" font-style="normal" >1</text>
<text x="1378.7" y="748.7" font-size="8.5" fill="#3a3a3a" text-anchor="middle" font-weight="normal" font-style="normal" >2</text>
<text x="1374.6" y="766.0" font-size="8.5" fill="#3a3a3a" text-anchor="middle" font-weight="normal" font-style="normal" >5</text>
<text x="1377.0" y="784.3" font-size="8.5" fill="#3a3a3a" text-anchor="middle" font-weight="normal" font-style="normal" >10</text>
<text x="1387.0" y="799.3" font-size="8.5" fill="#3a3a3a" text-anchor="middle" font-weight="normal" font-style="normal" >20</text>
<path d="M1449.3,788.5 L1453.6,792.8 M1457.2,776.7 L1462.8,779.0 M1460.0,762.7 L1466.0,762.7 M1457.2,748.7 L1462.8,746.4 M1449.3,736.9 L1453.6,732.6 M1437.5,729.0 L1439.8,723.4 M1423.5,726.2 L1423.5,720.2 M1409.5,729.0 L1407.2,723.4 M1397.7,736.9 L1393.4,732.6 M1389.8,748.7 L1384.2,746.4 M1387.0,762.7 L1381.0,762.7 M1389.8,776.7 L1384.2,779.0 M1397.7,788.5 L1393.4,792.8 " stroke="#4a4a4a" stroke-width="1" fill="none"/>
<text x="1383.0" y="811.7" font-size="11.5" fill="#2c2c2c" text-anchor="middle" font-weight="normal" font-style="normal" >V</text>
<text x="1463.5" y="811.7" font-size="11.5" fill="#2c2c2c" text-anchor="middle" font-weight="normal" font-style="normal" >mV</text>
<circle cx="1424.0" cy="763.3000000000001" r="37.5" fill="#5c5c5c"/>
<circle cx="1423.5" cy="762.7" r="37" fill="url(#dialOuter)"/>
<circle cx="1423.6" cy="763.0" r="20.2" fill="url(#recess)"/>
<circle cx="1423.1" cy="762.2" r="17.7" fill="url(#dialInner)"/>
<path d="M1410.3,730.8 L1420.6,738.5 L1408.4,743.5 Z" fill="#189cf0" stroke="#189cf0" stroke-width="0.8" stroke-linejoin="round"/>
<path d="M1433.8,767.5 L1435.4,774.6 L1428.3,772.2 Z" fill="#189cf0" stroke="#189cf0" stroke-width="0.8" stroke-linejoin="round"/>
<rect x="1402.1" y="802.0000000000001" width="43.600000000000136" height="15.200000000000045" fill="#101010"/>
<rect x="1403.3999999999999" y="803.3000000000001" width="42.30000000000014" height="13.900000000000045" fill="#ffffff"/>
<text x="1404.3" y="811.6" font-size="10.5" fill="#3838c0" text-anchor="start" font-weight="normal" font-style="normal" >0.5</text>
<text x="1539.4" y="579.8" font-size="15" fill="#10a050" text-anchor="middle" font-weight="bold" font-style="normal" textLength="70.6" lengthAdjust="spacingAndGlyphs">Channel D</text>
<text x="1519.3" y="602.0" font-size="11" fill="#2c2c2c" text-anchor="middle" font-weight="normal" font-style="normal" >Position</text>
<rect x="1495.8999999999999" y="605.4" width="49.700000000000045" height="100.20000000000005" fill="#f6f6f6"/>
<rect x="1496.8" y="606.3" width="49.00000000000004" height="99.50000000000004" fill="#0c0c0c"/>
<path d="M1496.8,704.6 V606.3 H1544.6 V607.6 H1498.1 V704.6 Z" fill="#0c0c0c"/>
<rect x="1498.1" y="607.6" width="46.50000000000004" height="97.00000000000004" fill="#ececec"/>
<rect x="1498.1" y="607.6" width="45.40000000000005" height="95.90000000000005" fill="#b2b2b2"/>
<rect x="1506.0" y="608.9" width="30.09999999999991" height="93.10000000000002" fill="url(#rollV)"/>
<rect x="1535.1999999999998" y="608.9" width="1" height="93.10000000000002" fill="#111"/>
<line x1="1506.3" y1="608.9" x2="1506.3" y2="702" stroke="#444" stroke-width="0.8" stroke-dasharray="2,3" opacity="0.6"/>
<path d="M1506.6,614.0 h2.6 M1535.1,614.0 h-2.6 M1506.6,619.0 h2.6 M1535.1,619.0 h-2.6 M1506.6,624.0 h2.6 M1535.1,624.0 h-2.6 M1506.6,629.0 h5 M1535.1,629.0 h-5 M1506.6,634.0 h2.6 M1535.1,634.0 h-2.6 M1506.6,639.0 h2.6 M1535.1,639.0 h-2.6 M1506.6,644.0 h2.6 M1535.1,644.0 h-2.6 M1506.6,649.0 h2.6 M1535.1,649.0 h-2.6 M1506.6,654.0 h5 M1535.1,654.0 h-5 M1506.6,659.0 h2.6 M1535.1,659.0 h-2.6 M1506.6,664.0 h2.6 M1535.1,664.0 h-2.6 M1506.6,669.0 h2.6 M1535.1,669.0 h-2.6 M1506.6,674.0 h2.6 M1535.1,674.0 h-2.6 M1506.6,679.0 h5 M1535.1,679.0 h-5 M1506.6,684.0 h2.6 M1535.1,684.0 h-2.6 M1506.6,689.0 h2.6 M1535.1,689.0 h-2.6 M1506.6,694.0 h2.6 M1535.1,694.0 h-2.6 M1506.6,699.0 h2.6 M1535.1,699.0 h-2.6 " stroke="#6c6c6c" stroke-width="1.25" fill="none"/>
<text x="1520.8" y="633.2" font-size="12" fill="#1c1c1c" text-anchor="middle" font-weight="normal" font-style="normal" >-130</text>
<text x="1520.8" y="658.2" font-size="12" fill="#1c1c1c" text-anchor="middle" font-weight="normal" font-style="normal" >-120</text>
<text x="1520.8" y="683.2" font-size="12" fill="#1c1c1c" text-anchor="middle" font-weight="normal" font-style="normal" >-110</text>
<path d="M1497.8999999999999,648 L1504.5,654 L1497.8999999999999,660 Z" fill="#ff0000"/>
<path d="M1543.1,648 L1536.5,654 L1543.1,660 Z" fill="#ff0000"/>
<path d="M1489.6999999999998,639.6 l4.2,8.8 h-8.4 Z M1489.6999999999998,667.6 l4.2,-8.8 h-8.4 Z" fill="#10a050"/>
<line x1="1489.6999999999998" y1="645.6" x2="1489.6999999999998" y2="661.6" stroke="#10a050" stroke-width="1.5"/>
<text x="1576.0" y="609.4" font-size="11" fill="#2c2c2c" text-anchor="end" font-weight="normal" font-style="normal" >AC</text>
<text x="1576.0" y="627.0" font-size="11" fill="#2c2c2c" text-anchor="end" font-weight="normal" font-style="normal" >DC</text>
<text x="1576.0" y="644.6" font-size="11" fill="#2c2c2c" text-anchor="end" font-weight="normal" font-style="normal" >GND</text>
<text x="1576.0" y="662.2" font-size="11" fill="#2c2c2c" text-anchor="end" font-weight="normal" font-style="normal" >OFF</text>
<rect x="1578.0" y="592" width="18.59999999999991" height="79.60000000000002" fill="#f6f6f6"/>
<rect x="1578.9" y="592.9" width="17.89999999999991" height="78.90000000000002" fill="#505050"/>
<path d="M1578.9,670.6 V592.9 H1595.6 V594.2 H1580.2 V670.6 Z" fill="#0c0c0c"/>
<rect x="1580.2" y="594.2" width="15.39999999999991" height="76.40000000000002" fill="#ececec"/>
<rect x="1580.2" y="594.2" width="14.299999999999908" height="75.30000000000003" fill="#adadad"/>
<rect x="1585.8999999999999" y="599.6" width="2.3" height="64.10000000000002" fill="#000"/>
<rect x="1588.1999999999998" y="600.6" width="1" height="64.10000000000002" fill="#f0f0f0"/>
<rect x="1580.8" y="651.2" width="13.399999999999864" height="17.600000000000023" fill="#5a5a5a"/>
<rect x="1580.8" y="651.2" width="12.399999999999864" height="16.600000000000023" fill="#f6f6f6"/>
<rect x="1581.8" y="652.2" width="11.399999999999864" height="15.600000000000023" fill="#c4c4c4"/>
<path d="M1583.0,654.4 H1591.6 M1583.0,658.4 H1591.6 M1583.0,662.3 H1591.6 M1583.0,666.3 H1591.6 " stroke="#4c4c4c" stroke-width="1.3" fill="none"/>
<path d="M1583.0,654.4 H1591.6 M1583.0,658.4 H1591.6 M1583.0,662.3 H1591.6 M1583.0,666.3 H1591.6 " stroke="#f4f4f4" stroke-width="1.2" fill="none" transform="translate(0,1.6)"/>
<rect x="1578.0" y="673.6" width="18.5" height="17.600000000000023" fill="#282828"/>
<rect x="1578.0" y="673.6" width="17.2" height="16.300000000000022" fill="#c8c8c8"/>
<rect x="1579.2" y="674.8000000000001" width="16.0" height="15.100000000000023" fill="url(#btnDark)"/>
<text x="1576.0" y="686.0" font-size="11" fill="#2c2c2c" text-anchor="end" font-weight="normal" font-style="normal" >Invert</text>
<clipPath id="cp1541762"><path d="M1486.0,817.6000000000001 V762.7 A55.1,54.0 0 0 1 1596.1999999999998,762.7 V817.6000000000001 Z"/></clipPath>
<g clip-path="url(#cp1541762)">
<rect x="1485.0" y="706.6" width="112.2" height="112.00000000000009" fill="#ffffff"/>
<rect x="1517.0" y="762.7" width="47.899999999999864" height="56.90000000000009" fill="#a9a9a9"/>
<rect x="1515.8" y="762.7" width="1.3" height="56.90000000000009" fill="#5a5a5a"/>
<rect x="1564.8" y="762.7" width="1.3" height="56.90000000000009" fill="#5a5a5a"/>
<line x1="1558.1" y1="736.9" x2="1575.3" y2="707.6" stroke="#606060" stroke-width="4.7"/>
<line x1="1558.1" y1="736.9" x2="1575.3" y2="707.6" stroke="#a9a9a9" stroke-width="2.5"/>
</g>
<path d="M1486.0,817.6000000000001 V762.7 A55.1,54.0 0 0 1 1596.1999999999998,762.7 V817.6000000000001" fill="none" stroke="#5a5a5a" stroke-width="1.3"/>
<path d="M1486.0,817.6000000000001 H1516.4 M1565.4999999999998,817.6000000000001 H1596.1999999999998" fill="none" stroke="#5a5a5a" stroke-width="1.4"/>
<text x="1575.2" y="799.3" font-size="8.5" fill="#3a3a3a" text-anchor="middle" font-weight="normal" font-style="normal" >2</text>
<text x="1586.0" y="784.7" font-size="8.5" fill="#3a3a3a" text-anchor="middle" font-weight="normal" font-style="normal" >5</text>
<text x="1590.0" y="766.0" font-size="8.5" fill="#3a3a3a" text-anchor="middle" font-weight="normal" font-style="normal" >10</text>
<text x="1586.8" y="748.7" font-size="8.5" fill="#3a3a3a" text-anchor="middle" font-weight="normal" font-style="normal" >20</text>
<text x="1576.3" y="732.0" font-size="8.5" fill="#3a3a3a" text-anchor="middle" font-weight="normal" font-style="normal" >50</text>
<text x="1558.6" y="720.8" font-size="8.5" fill="#3a3a3a" text-anchor="middle" font-weight="normal" font-style="normal" >0.1</text>
<text x="1541.9" y="717.3" font-size="8.5" fill="#3a3a3a" text-anchor="middle" font-weight="normal" font-style="normal" >0.2</text>
<text x="1523.2" y="720.8" font-size="8.5" fill="#3a3a3a" text-anchor="middle" font-weight="normal" font-style="normal" >0.5</text>
<text x="1506.6" y="732.4" font-size="8.5" fill="#3a3a3a" text-anchor="middle" font-weight="normal" font-style="normal" >1</text>
<text x="1496.3" y="748.7" font-size="8.5" fill="#3a3a3a" text-anchor="middle" font-weight="normal" font-style="normal" >2</text>
<text x="1492.2" y="766.0" font-size="8.5" fill="#3a3a3a" text-anchor="middle" font-weight="normal" font-style="normal" >5</text>
<text x="1494.6" y="784.3" font-size="8.5" fill="#3a3a3a" text-anchor="middle" font-weight="normal" font-style="normal" >10</text>
<text x="1504.6" y="799.3" font-size="8.5" fill="#3a3a3a" text-anchor="middle" font-weight="normal" font-style="normal" >20</text>
<path d="M1566.9,788.5 L1571.2,792.8 M1574.8,776.7 L1580.4,779.0 M1577.6,762.7 L1583.6,762.7 M1574.8,748.7 L1580.4,746.4 M1566.9,736.9 L1571.2,732.6 M1555.1,729.0 L1557.4,723.4 M1541.1,726.2 L1541.1,720.2 M1527.1,729.0 L1524.8,723.4 M1515.3,736.9 L1511.0,732.6 M1507.4,748.7 L1501.8,746.4 M1504.6,762.7 L1498.6,762.7 M1507.4,776.7 L1501.8,779.0 M1515.3,788.5 L1511.0,792.8 " stroke="#4a4a4a" stroke-width="1" fill="none"/>
<text x="1500.6" y="811.7" font-size="11.5" fill="#2c2c2c" text-anchor="middle" font-weight="normal" font-style="normal" >V</text>
<text x="1581.1" y="811.7" font-size="11.5" fill="#2c2c2c" text-anchor="middle" font-weight="normal" font-style="normal" >mV</text>
<circle cx="1541.6" cy="763.3000000000001" r="37.5" fill="#5c5c5c"/>
<circle cx="1541.1" cy="762.7" r="37" fill="url(#dialOuter)"/>
<circle cx="1541.1999999999998" cy="763.0" r="20.2" fill="url(#recess)"/>
<circle cx="1540.6999999999998" cy="762.2" r="17.7" fill="url(#dialInner)"/>
<path d="M1506.6,762.7 L1517.6,756.1 L1517.6,769.3 Z" fill="#10a050" stroke="#10a050" stroke-width="0.8" stroke-linejoin="round"/>
<path d="M1551.4,767.5 L1553.0,774.6 L1545.9,772.2 Z" fill="#10a050" stroke="#10a050" stroke-width="0.8" stroke-linejoin="round"/>
<rect x="1519.6999999999998" y="802.0000000000001" width="43.600000000000136" height="15.200000000000045" fill="#101010"/>
<rect x="1520.9999999999998" y="803.3000000000001" width="42.30000000000014" height="13.900000000000045" fill="#ffffff"/>
<text x="1521.9" y="811.6" font-size="10.5" fill="#3838c0" text-anchor="start" font-weight="normal" font-style="normal" >5</text>
<text x="1301.6" y="314.8" font-size="15" fill="#f08496" text-anchor="middle" font-weight="bold" font-style="normal" >Trigger</text>
<text x="1286.0" y="337.0" font-size="11" fill="#2c2c2c" text-anchor="middle" font-weight="normal" font-style="normal" >Level</text>
<rect x="1260.7" y="340.4" width="49.700000000000045" height="100.20000000000005" fill="#f6f6f6"/>
<rect x="1261.6000000000001" y="341.29999999999995" width="49.00000000000004" height="99.50000000000004" fill="#0c0c0c"/>
<path d="M1261.6000000000001,439.6 V341.29999999999995 H1309.4 V342.59999999999997 H1262.9 V439.6 Z" fill="#0c0c0c"/>
<rect x="1262.9" y="342.59999999999997" width="46.50000000000004" height="97.00000000000004" fill="#ececec"/>
<rect x="1262.9" y="342.59999999999997" width="45.40000000000005" height="95.90000000000005" fill="#b2b2b2"/>
<rect x="1270.8000000000002" y="343.9" width="30.09999999999991" height="93.10000000000002" fill="url(#rollV)"/>
<rect x="1300.0" y="343.9" width="1" height="93.10000000000002" fill="#111"/>
<line x1="1271.1000000000001" y1="343.9" x2="1271.1000000000001" y2="437" stroke="#444" stroke-width="0.8" stroke-dasharray="2,3" opacity="0.6"/>
<path d="M1271.4,349.0 h2.6 M1299.9,349.0 h-2.6 M1271.4,354.0 h2.6 M1299.9,354.0 h-2.6 M1271.4,359.0 h2.6 M1299.9,359.0 h-2.6 M1271.4,364.0 h5 M1299.9,364.0 h-5 M1271.4,369.0 h2.6 M1299.9,369.0 h-2.6 M1271.4,374.0 h2.6 M1299.9,374.0 h-2.6 M1271.4,379.0 h2.6 M1299.9,379.0 h-2.6 M1271.4,384.0 h2.6 M1299.9,384.0 h-2.6 M1271.4,389.0 h5 M1299.9,389.0 h-5 M1271.4,394.0 h2.6 M1299.9,394.0 h-2.6 M1271.4,399.0 h2.6 M1299.9,399.0 h-2.6 M1271.4,404.0 h2.6 M1299.9,404.0 h-2.6 M1271.4,409.0 h2.6 M1299.9,409.0 h-2.6 M1271.4,414.0 h5 M1299.9,414.0 h-5 M1271.4,419.0 h2.6 M1299.9,419.0 h-2.6 M1271.4,424.0 h2.6 M1299.9,424.0 h-2.6 M1271.4,429.0 h2.6 M1299.9,429.0 h-2.6 M1271.4,434.0 h2.6 M1299.9,434.0 h-2.6 " stroke="#6c6c6c" stroke-width="1.25" fill="none"/>
<text x="1285.7" y="368.2" font-size="12" fill="#1c1c1c" text-anchor="middle" font-weight="normal" font-style="normal" >-10</text>
<text x="1285.7" y="393.2" font-size="12" fill="#1c1c1c" text-anchor="middle" font-weight="normal" font-style="normal" >0</text>
<text x="1285.7" y="418.2" font-size="12" fill="#1c1c1c" text-anchor="middle" font-weight="normal" font-style="normal" >10</text>
<path d="M1262.7,383 L1269.3000000000002,389 L1262.7,395 Z" fill="#ff0000"/>
<path d="M1307.9,383 L1301.3000000000002,389 L1307.9,395 Z" fill="#ff0000"/>
<path d="M1254.1,374.6 l4.2,8.8 h-8.4 Z M1254.1,402.6 l4.2,-8.8 h-8.4 Z" fill="#f08c98"/>
<line x1="1254.1" y1="380.6" x2="1254.1" y2="396.6" stroke="#f08c98" stroke-width="1.5"/>
<text x="1340.2" y="344.4" font-size="11" fill="#2c2c2c" text-anchor="end" font-weight="normal" font-style="normal" >AC</text>
<text x="1340.2" y="362.0" font-size="11" fill="#2c2c2c" text-anchor="end" font-weight="normal" font-style="normal" >DC</text>
<rect x="1342.2" y="327.3" width="18.899999999999864" height="42.099999999999966" fill="#f6f6f6"/>
<rect x="1343.1000000000001" y="328.2" width="18.199999999999864" height="41.39999999999996" fill="#505050"/>
<path d="M1343.1000000000001,368.4 V328.2 H1360.1 V329.5 H1344.4 V368.4 Z" fill="#0c0c0c"/>
<rect x="1344.4" y="329.5" width="15.699999999999864" height="38.89999999999996" fill="#ececec"/>
<rect x="1344.4" y="329.5" width="14.599999999999863" height="37.79999999999997" fill="#adadad"/>
<rect x="1350.25" y="334.90000000000003" width="2.3" height="26.599999999999966" fill="#000"/>
<rect x="1352.55" y="335.90000000000003" width="1" height="26.599999999999966" fill="#f0f0f0"/>
<rect x="1345.0" y="348.2" width="13.699999999999818" height="17.600000000000023" fill="#5a5a5a"/>
<rect x="1345.0" y="348.2" width="12.699999999999818" height="16.600000000000023" fill="#f6f6f6"/>
<rect x="1346.0" y="349.2" width="11.699999999999818" height="15.600000000000023" fill="#c4c4c4"/>
<path d="M1347.2,351.4 H1356.1 M1347.2,355.3 H1356.1 M1347.2,359.3 H1356.1 M1347.2,363.2 H1356.1 " stroke="#4c4c4c" stroke-width="1.3" fill="none"/>
<path d="M1347.2,351.4 H1356.1 M1347.2,355.3 H1356.1 M1347.2,359.3 H1356.1 M1347.2,363.2 H1356.1 " stroke="#f4f4f4" stroke-width="1.2" fill="none" transform="translate(0,1.6)"/>
<rect x="1342.2" y="383.6" width="18.899999999999864" height="42.19999999999999" fill="#f6f6f6"/>
<rect x="1343.1000000000001" y="384.5" width="18.199999999999864" height="41.499999999999986" fill="#505050"/>
<path d="M1343.1000000000001,424.8 V384.5 H1360.1 V385.8 H1344.4 V424.8 Z" fill="#0c0c0c"/>
<rect x="1344.4" y="385.8" width="15.699999999999864" height="38.999999999999986" fill="#ececec"/>
<rect x="1344.4" y="385.8" width="14.599999999999863" height="37.89999999999999" fill="#adadad"/>
<rect x="1350.25" y="391.20000000000005" width="2.3" height="26.69999999999999" fill="#000"/>
<rect x="1352.55" y="392.20000000000005" width="1" height="26.69999999999999" fill="#f0f0f0"/>
<rect x="1345.0" y="386.2" width="13.699999999999818" height="17.600000000000023" fill="#5a5a5a"/>
<rect x="1345.0" y="386.2" width="12.699999999999818" height="16.600000000000023" fill="#f6f6f6"/>
<rect x="1346.0" y="387.2" width="11.699999999999818" height="15.600000000000023" fill="#c4c4c4"/>
<path d="M1347.2,389.4 H1356.1 M1347.2,393.3 H1356.1 M1347.2,397.3 H1356.1 M1347.2,401.2 H1356.1 " stroke="#4c4c4c" stroke-width="1.3" fill="none"/>
<path d="M1347.2,389.4 H1356.1 M1347.2,393.3 H1356.1 M1347.2,397.3 H1356.1 M1347.2,401.2 H1356.1 " stroke="#f4f4f4" stroke-width="1.2" fill="none" transform="translate(0,1.6)"/>
<path d="M1329.6,402 H1333.8 V389.2 H1338.2 M1329.8,407.2 H1333.8 V420 H1338.2" stroke="#2c2c2c" stroke-width="1.7" fill="none"/>
<rect x="1343.4" y="441.6" width="17.59999999999991" height="17.19999999999999" fill="#282828"/>
<rect x="1343.4" y="441.6" width="16.29999999999991" height="15.899999999999988" fill="#ffffff"/>
<rect x="1344.6000000000001" y="442.8" width="15.099999999999909" height="14.699999999999989" fill="url(#btnPink)"/>
<rect x="1343.4" y="461.6" width="17.59999999999991" height="17.299999999999955" fill="#282828"/>
<rect x="1343.4" y="461.6" width="16.29999999999991" height="15.999999999999954" fill="#c8c8c8"/>
<rect x="1344.6000000000001" y="462.8" width="15.099999999999909" height="14.799999999999955" fill="url(#btnDark)"/>
<rect x="1343.4" y="481.6" width="17.59999999999991" height="17.399999999999977" fill="#282828"/>
<rect x="1343.4" y="481.6" width="16.29999999999991" height="16.099999999999977" fill="#c8c8c8"/>
<rect x="1344.6000000000001" y="482.8" width="15.099999999999909" height="14.899999999999977" fill="url(#btnDark)"/>
<text x="1339.6" y="454.8" font-size="11" fill="#2c2c2c" text-anchor="end" font-weight="normal" font-style="normal" >Auto</text>
<text x="1339.6" y="473.4" font-size="11" fill="#2c2c2c" text-anchor="end" font-weight="normal" font-style="normal" >One-Shot</text>
<text x="1339.6" y="493.5" font-size="11" fill="#2c2c2c" text-anchor="end" font-weight="normal" font-style="normal" textLength="43.5" lengthAdjust="spacingAndGlyphs">Cursors</text>
<text x="1304.9" y="518.3" font-size="11" fill="#2c2c2c" text-anchor="middle" font-weight="normal" font-style="normal" >Source</text>
<text x="1279.7" y="532.2" font-size="11" fill="#f4f020" text-anchor="middle" font-weight="bold" font-style="normal" >A</text>
<text x="1298.1" y="532.2" font-size="11" fill="#2094e4" text-anchor="middle" font-weight="bold" font-style="normal" >B</text>
<text x="1316.2" y="532.2" font-size="11" fill="#e4148c" text-anchor="middle" font-weight="bold" font-style="normal" >C</text>
<text x="1334.2" y="532.2" font-size="11" fill="#14a454" text-anchor="middle" font-weight="bold" font-style="normal" >D</text>
<rect x="1264.8" y="534.4" width="80.60000000000014" height="18.800000000000068" fill="#f6f6f6"/>
<rect x="1265.7" y="535.3" width="79.90000000000013" height="18.10000000000007" fill="#505050"/>
<path d="M1265.7,552.2 V535.3 H1344.4 V536.6 H1267.0 V552.2 Z" fill="#0c0c0c"/>
<rect x="1267.0" y="536.6" width="77.40000000000013" height="15.600000000000069" fill="#ececec"/>
<rect x="1267.0" y="536.6" width="76.30000000000014" height="14.500000000000068" fill="#adadad"/>
<rect x="1269.8" y="542.5999999999999" width="66.60000000000014" height="2.3" fill="#000"/>
<rect x="1270.8" y="544.9" width="66.60000000000014" height="1" fill="#f0f0f0"/>
<rect x="1268" y="538.0" width="18" height="12.0" fill="#5a5a5a"/>
<rect x="1268" y="538.0" width="17" height="11.0" fill="#f6f6f6"/>
<rect x="1269" y="539.0" width="16" height="10.0" fill="#c4c4c4"/>
<path d="M1271.0,540.0 V547.6 M1274.3,540.0 V547.6 M1277.6,540.0 V547.6 M1280.9,540.0 V547.6 M1284.2,540.0 V547.6 " stroke="#484848" stroke-width="1.3" fill="none"/>
<path d="M1271.0,540.0 V547.6 M1274.3,540.0 V547.6 M1277.6,540.0 V547.6 M1280.9,540.0 V547.6 M1284.2,540.0 V547.6 " stroke="#f4f4f4" stroke-width="1.1" fill="none" transform="translate(1.5,0)"/>
<text x="1301.9" y="578.2" font-size="15" fill="#e8842c" text-anchor="middle" font-weight="bold" font-style="normal" textLength="75.5" lengthAdjust="spacingAndGlyphs">Horizontal</text>
<text x="1304.5" y="606.0" font-size="11" fill="#2c2c2c" text-anchor="middle" font-weight="normal" font-style="normal" >Source</text>
<path d="M1263.2,617.6 L1275.2,609.6 V617.2" stroke="#e8842c" stroke-width="1.3" fill="none"/>
<text x="1287.4" y="617.5" font-size="11" fill="#f4f020" text-anchor="middle" font-weight="bold" font-style="normal" >A</text>
<text x="1305.5" y="617.5" font-size="11" fill="#2094e4" text-anchor="middle" font-weight="bold" font-style="normal" >B</text>
<text x="1323.7" y="617.5" font-size="11" fill="#e4148c" text-anchor="middle" font-weight="bold" font-style="normal" >C</text>
<text x="1341.8" y="617.5" font-size="11" fill="#14a454" text-anchor="middle" font-weight="bold" font-style="normal" >D</text>
<rect x="1256.2" y="620.8" width="99.39999999999986" height="18.600000000000023" fill="#f6f6f6"/>
<rect x="1257.1000000000001" y="621.6999999999999" width="98.69999999999986" height="17.900000000000023" fill="#505050"/>
<path d="M1257.1000000000001,638.4 V621.6999999999999 H1354.6 V623.0 H1258.4 V638.4 Z" fill="#0c0c0c"/>
<rect x="1258.4" y="623.0" width="96.19999999999986" height="15.400000000000023" fill="#ececec"/>
<rect x="1258.4" y="623.0" width="95.09999999999987" height="14.300000000000022" fill="#adadad"/>
<rect x="1261.2" y="628.8999999999999" width="85.39999999999986" height="2.3" fill="#000"/>
<rect x="1262.2" y="631.1999999999999" width="85.39999999999986" height="1" fill="#f0f0f0"/>
<rect x="1259.4" y="624.4" width="18.0" height="11.799999999999955" fill="#5a5a5a"/>
<rect x="1259.4" y="624.4" width="17.0" height="10.799999999999955" fill="#f6f6f6"/>
<rect x="1260.4" y="625.4" width="16.0" height="9.799999999999955" fill="#c4c4c4"/>
<path d="M1262.4,626.4 V633.8 M1265.7,626.4 V633.8 M1269.0,626.4 V633.8 M1272.3,626.4 V633.8 M1275.6,626.4 V633.8 " stroke="#484848" stroke-width="1.3" fill="none"/>
<path d="M1262.4,626.4 V633.8 M1265.7,626.4 V633.8 M1269.0,626.4 V633.8 M1272.3,626.4 V633.8 M1275.6,626.4 V633.8 " stroke="#f4f4f4" stroke-width="1.1" fill="none" transform="translate(1.5,0)"/>
<text x="1304.1" y="653.2" font-size="11" fill="#2c2c2c" text-anchor="middle" font-weight="normal" font-style="normal" >Position</text>
<rect x="1256.2" y="657.4" width="100.20000000000005" height="48.80000000000007" fill="#f6f6f6"/>
<rect x="1257.1000000000001" y="658.3" width="99.50000000000004" height="48.100000000000065" fill="#0c0c0c"/>
<path d="M1257.1000000000001,705.2 V658.3 H1355.4 V659.6 H1258.4 V705.2 Z" fill="#0c0c0c"/>
<rect x="1258.4" y="659.6" width="97.00000000000004" height="45.600000000000065" fill="#ececec"/>
<rect x="1258.4" y="659.6" width="95.90000000000005" height="44.50000000000007" fill="#b2b2b2"/>
<rect x="1259.6" y="666.6" width="92.8" height="29.6" fill="url(#rollH)"/>
<rect x="1259.6" y="695.4" width="92.8" height="1" fill="#111"/>
<path d="M1259.0,667 v2.6 M1259.0,695.4 v-2.6 M1264.1,667 v2.6 M1264.1,695.4 v-2.6 M1269.2,667 v2.6 M1269.2,695.4 v-2.6 M1274.2,667 v2.6 M1274.2,695.4 v-2.6 M1279.2,667 v5 M1279.2,695.4 v-5 M1284.3,667 v2.6 M1284.3,695.4 v-2.6 M1289.3,667 v2.6 M1289.3,695.4 v-2.6 M1294.4,667 v2.6 M1294.4,695.4 v-2.6 M1299.5,667 v2.6 M1299.5,695.4 v-2.6 M1304.5,667 v5 M1304.5,695.4 v-5 M1309.5,667 v2.6 M1309.5,695.4 v-2.6 M1314.6,667 v2.6 M1314.6,695.4 v-2.6 M1319.7,667 v2.6 M1319.7,695.4 v-2.6 M1324.7,667 v2.6 M1324.7,695.4 v-2.6 M1329.8,667 v5 M1329.8,695.4 v-5 M1334.8,667 v2.6 M1334.8,695.4 v-2.6 M1339.8,667 v2.6 M1339.8,695.4 v-2.6 M1344.9,667 v2.6 M1344.9,695.4 v-2.6 M1350.0,667 v2.6 M1350.0,695.4 v-2.6 " stroke="#606060" stroke-width="1.1" fill="none"/>
<rect x="1259.6" y="666.2" width="92.8" height="0.9" fill="#e8e8e8"/>
<text x="1279.3" y="684.9" font-size="12" fill="#1c1c1c" text-anchor="middle" font-weight="normal" font-style="normal" >210</text>
<text x="1304.5" y="684.9" font-size="12" fill="#1c1c1c" text-anchor="middle" font-weight="normal" font-style="normal" >200</text>
<text x="1330.1" y="684.9" font-size="12" fill="#1c1c1c" text-anchor="middle" font-weight="normal" font-style="normal" >190</text>
<path d="M1298.5,659.2 H1310.6 L1304.5,664.8 Z" fill="#ff0000"/>
<path d="M1298.5,703.4 H1310.6 L1304.5,697.8 Z" fill="#ff0000"/>
<clipPath id="cp1305761"><path d="M1250.7,817.6 V761.1 A55.1,54.0 0 0 1 1360.8999999999999,761.1 V817.6 Z"/></clipPath>
<g clip-path="url(#cp1305761)">
<rect x="1249.7" y="705.0" width="112.2" height="113.6" fill="#ffffff"/>
<rect x="1281.7" y="761.1" width="47.899999999999864" height="58.5" fill="#a9a9a9"/>
<rect x="1280.5" y="761.1" width="1.3" height="58.5" fill="#5a5a5a"/>
<rect x="1329.5" y="761.1" width="1.3" height="58.5" fill="#5a5a5a"/>
<line x1="1322.0" y1="733.5" x2="1337.8" y2="710.3" stroke="#606060" stroke-width="4.7"/>
<line x1="1322.0" y1="733.5" x2="1337.8" y2="710.3" stroke="#a9a9a9" stroke-width="2.5"/>
</g>
<path d="M1250.7,817.6 V761.1 A55.1,54.0 0 0 1 1360.8999999999999,761.1 V817.6" fill="none" stroke="#5a5a5a" stroke-width="1.3"/>
<path d="M1250.7,817.6 H1281.1000000000001 M1330.1999999999998,817.6 H1360.8999999999999" fill="none" stroke="#5a5a5a" stroke-width="1.4"/>
<text x="1340.9" y="802.0" font-size="8.5" fill="#3a3a3a" text-anchor="middle" font-weight="normal" font-style="normal" >0.5</text>
<text x="1350.8" y="791.8" font-size="8.5" fill="#3a3a3a" text-anchor="middle" font-weight="normal" font-style="normal" >1</text>
<text x="1354.3" y="777.0" font-size="8.5" fill="#3a3a3a" text-anchor="middle" font-weight="normal" font-style="normal" >2</text>
<text x="1355.0" y="764.6" font-size="8.5" fill="#3a3a3a" text-anchor="middle" font-weight="normal" font-style="normal" >5</text>
<text x="1352.0" y="751.0" font-size="8.5" fill="#3a3a3a" text-anchor="middle" font-weight="normal" font-style="normal" >10</text>
<text x="1347.1" y="738.6" font-size="8.5" fill="#3a3a3a" text-anchor="middle" font-weight="normal" font-style="normal" >20</text>
<text x="1338.1" y="730.5" font-size="8.5" fill="#3a3a3a" text-anchor="middle" font-weight="normal" font-style="normal" >50</text>
<text x="1324.4" y="722.2" font-size="8.5" fill="#3a3a3a" text-anchor="middle" font-weight="normal" font-style="normal" >0.1</text>
<text x="1314.2" y="715.9" font-size="8.5" fill="#3a3a3a" text-anchor="middle" font-weight="normal" font-style="normal" >0.2</text>
<text x="1298.3" y="715.9" font-size="8.5" fill="#3a3a3a" text-anchor="middle" font-weight="normal" font-style="normal" >0.5</text>
<text x="1286.9" y="721.5" font-size="8.5" fill="#3a3a3a" text-anchor="middle" font-weight="normal" font-style="normal" >1</text>
<text x="1274.8" y="729.0" font-size="8.5" fill="#3a3a3a" text-anchor="middle" font-weight="normal" font-style="normal" >2</text>
<text x="1265.7" y="738.6" font-size="8.5" fill="#3a3a3a" text-anchor="middle" font-weight="normal" font-style="normal" >5</text>
<text x="1258.9" y="751.0" font-size="8.5" fill="#3a3a3a" text-anchor="middle" font-weight="normal" font-style="normal" >10</text>
<text x="1257.4" y="763.4" font-size="8.5" fill="#3a3a3a" text-anchor="middle" font-weight="normal" font-style="normal" >20</text>
<text x="1257.4" y="778.2" font-size="8.5" fill="#3a3a3a" text-anchor="middle" font-weight="normal" font-style="normal" >50</text>
<text x="1259.7" y="790.6" font-size="8.5" fill="#3a3a3a" text-anchor="middle" font-weight="normal" font-style="normal" >100</text>
<text x="1270.7" y="801.7" font-size="8.5" fill="#3a3a3a" text-anchor="middle" font-weight="normal" font-style="normal" >200</text>
<path d="M1330.9,787.6 L1335.1,791.9 M1337.3,779.6 L1342.4,782.6 M1341.2,770.2 L1347.0,771.7 M1342.3,760.0 L1348.3,759.9 M1340.6,750.0 L1346.3,748.2 M1336.1,740.8 L1341.1,737.5 M1329.3,733.2 L1333.2,728.6 M1320.7,727.8 L1323.1,722.3 M1310.9,725.0 L1311.7,719.0 M1300.7,725.0 L1299.9,719.0 M1290.9,727.8 L1288.4,722.3 M1282.3,733.2 L1278.4,728.6 M1275.5,740.8 L1270.5,737.5 M1271.0,750.0 L1265.3,748.2 M1269.3,760.0 L1263.3,759.9 M1270.4,770.2 L1264.6,771.7 M1274.3,779.6 L1269.2,782.6 M1280.7,787.6 L1276.6,791.9 " stroke="#4a4a4a" stroke-width="1" fill="none"/>
<text x="1264.7" y="812.3" font-size="11.5" fill="#2c2c2c" text-anchor="middle" font-weight="normal" font-style="normal" >ms</text>
<text x="1344.7" y="812.3" font-size="11.5" fill="#2c2c2c" text-anchor="middle" font-weight="normal" font-style="normal" >µs</text>
<circle cx="1306.3" cy="761.7" r="37.5" fill="#5c5c5c"/>
<circle cx="1305.8" cy="761.1" r="37" fill="url(#dialOuter)"/>
<circle cx="1305.8999999999999" cy="761.4" r="20.2" fill="url(#recess)"/>
<circle cx="1305.3999999999999" cy="760.6" r="17.7" fill="url(#dialInner)"/>
<path d="M1338.7,750.6 L1330.2,760.2 L1326.2,747.7 Z" fill="#e8801c" stroke="#e8801c" stroke-width="0.8" stroke-linejoin="round"/>
<path d="M1316.1,765.9 L1317.7,773.0 L1310.6,770.6 Z" fill="#e8801c" stroke="#e8801c" stroke-width="0.8" stroke-linejoin="round"/>
<rect x="1284.3999999999999" y="802.0" width="43.600000000000136" height="15.200000000000045" fill="#101010"/>
<rect x="1285.6999999999998" y="803.3" width="42.30000000000014" height="13.900000000000045" fill="#ffffff"/>
<text x="1286.6" y="811.6" font-size="10.5" fill="#3838c0" text-anchor="start" font-weight="normal" font-style="normal" >10u</text>
</svg>
</body></html>
